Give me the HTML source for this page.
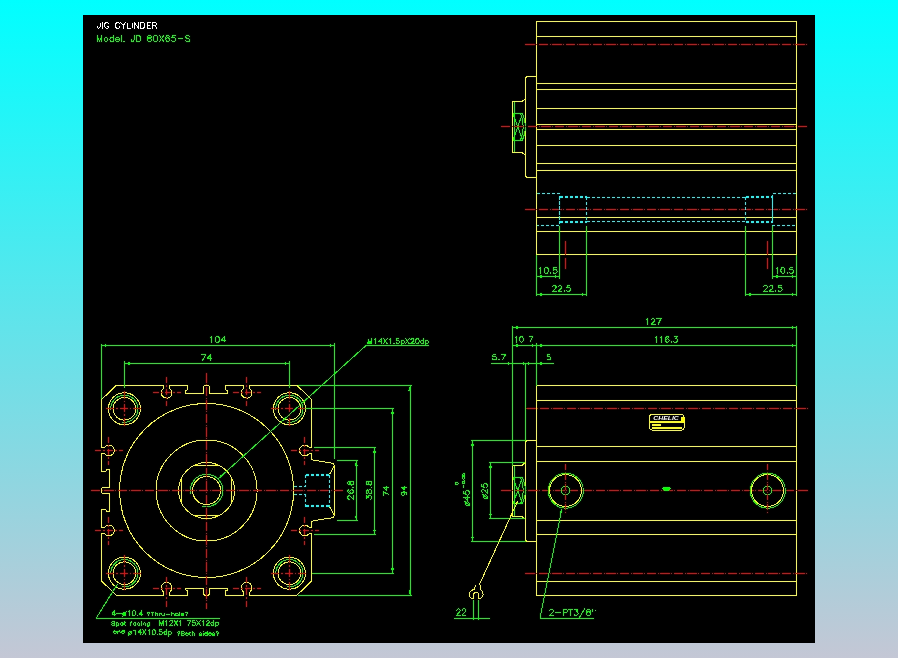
<!DOCTYPE html>
<html><head><meta charset="utf-8"><title>JIG CYLINDER</title>
<style>
html,body{margin:0;padding:0;background:#c4c7d5;}
body{width:898px;height:658px;overflow:hidden;font-family:"Liberation Sans",sans-serif;}
#bg{position:absolute;left:0;top:0;width:898px;height:658px;background:linear-gradient(to bottom,#00ffff 0%,#c4c7d5 100%);}
#panel{position:absolute;left:83px;top:15px;width:732px;height:628px;background:#000;}
svg{position:absolute;left:0;top:0;}
svg text{font-family:"Liberation Sans",sans-serif;}
svg line,svg polyline,svg path,svg circle,svg rect{stroke-width:1;}
</style></head><body>
<div id="bg"></div><div id="panel"></div>
<svg width="898" height="658" viewBox="0 0 898 658">
<defs><filter id="jp" x="83" y="15" width="732" height="628" filterUnits="userSpaceOnUse" color-interpolation-filters="sRGB">
<feConvolveMatrix in="SourceGraphic" order="3" kernelMatrix="1 2 1 2 4 2 1 2 1" divisor="16" edgeMode="duplicate" preserveAlpha="true" result="B"/>
<feColorMatrix in="SourceGraphic" type="matrix" values=".299 .587 .114 0 0 .299 .587 .114 0 0 .299 .587 .114 0 0 0 0 0 0 1" result="YS"/>
<feColorMatrix in="B" type="matrix" values=".299 .587 .114 0 0 .299 .587 .114 0 0 .299 .587 .114 0 0 0 0 0 0 1" result="YB"/>
<feBlend in="YS" in2="YB" mode="lighten" result="MX"/>
<feBlend in="MX" in2="YB" mode="difference" result="T"/>
<feBlend in="MX" in2="YS" mode="difference" result="U"/>
<feComposite in="T" in2="B" operator="arithmetic" k1="0" k2="1" k3="1" k4="0" result="O1"/>
<feBlend in="O1" in2="U" mode="lighten" result="MX2"/>
<feBlend in="MX2" in2="U" mode="difference"/>
</filter></defs>
<g filter="url(#jp)" shape-rendering="crispEdges">
<rect x="83" y="15" width="732" height="628" fill="#000"/>
<path transform="translate(97.1,28.2)" d="M2.91,-5.49 L2.91,-1.26 L2.62,-0.52 L2.28,-0.22 L1.80,0.00 L1.16,0.00 L0.58,-0.26 L0.29,-0.52 L0.00,-1.26 L0.00,-1.83 L0.00,-1.26 L0.29,-0.52 L0.58,-0.26 L1.16,0.00 L1.80,0.00 L2.28,-0.22 L2.62,-0.52 L2.91,-1.26Z M5.29,-5.49 L5.29,0.00 M9.12,-5.49 L10.34,-5.49 L10.82,-5.27 L11.45,-4.70 L11.75,-4.18 L11.45,-4.70 L10.82,-5.27 L10.34,-5.49 L9.12,-5.49 L8.54,-5.22 L7.96,-4.70 L7.38,-3.44 L7.38,-2.05 L7.91,-0.83 L8.54,-0.26 L9.12,0.00 L10.34,0.00 L10.82,-0.22 L11.50,-0.83 L11.75,-1.26 L11.75,-2.09 L10.29,-2.09 L11.75,-2.05 L11.75,-1.26 L11.50,-0.83 L10.82,-0.22 L10.34,0.00 L9.12,0.00 L8.54,-0.26 L7.91,-0.83 L7.38,-2.05 L7.38,-3.44 L7.62,-4.09 L7.96,-4.70 L8.54,-5.22Z M19.95,-5.49 L21.16,-5.49 L21.65,-5.27 L22.28,-4.70 L22.57,-4.18 L22.28,-4.70 L21.65,-5.27 L21.16,-5.49 L19.95,-5.49 L19.37,-5.22 L18.78,-4.70 L18.20,-3.44 L18.20,-2.05 L18.73,-0.83 L19.37,-0.26 L19.95,0.00 L21.16,0.00 L21.65,-0.22 L22.33,-0.83 L22.57,-1.31 L22.33,-0.83 L21.65,-0.22 L21.16,0.00 L19.95,0.00 L19.37,-0.26 L18.73,-0.83 L18.20,-2.05 L18.20,-3.44 L18.44,-4.09 L18.78,-4.70 L19.37,-5.22Z M28.44,-5.49 L26.11,-2.87 L23.78,-5.49 L26.11,-2.87 L26.11,0.00 L26.11,-2.87Z M29.95,-5.49 L29.95,0.00 L33.44,0.00 L29.95,-0.04Z M34.94,-5.49 L34.94,0.00 M37.32,-5.49 L37.32,0.00 L37.37,-5.40 L41.40,0.00 L41.40,-5.49 L41.35,-0.09Z M43.83,-5.49 L45.86,-5.49 L46.59,-5.27 L47.27,-4.70 L47.61,-4.09 L47.85,-3.44 L47.85,-2.05 L47.32,-0.83 L46.59,-0.22 L45.86,0.00 L43.78,-0.04Z M43.78,-5.49 L43.78,0.00 L45.86,0.00 L46.59,-0.22 L47.32,-0.83 L47.85,-2.05 L47.85,-3.44 L47.61,-4.09 L47.27,-4.70 L46.59,-5.27 L45.86,-5.49Z M49.94,-5.49 L49.94,0.00 L53.73,0.00 L49.94,-0.04 L49.94,-2.83 L52.27,-2.87 L49.94,-2.92 L49.94,-5.44 L53.73,-5.49Z M55.52,-5.44 L58.19,-5.49 L59.02,-5.22 L59.31,-4.96 L59.60,-4.44 L59.60,-3.88 L59.36,-3.44 L59.02,-3.13 L58.19,-2.87 L55.57,-2.87Z M55.52,-5.49 L55.52,0.00 L55.57,-2.87 L57.56,-2.87 L59.60,0.00 L57.61,-2.79 L57.66,-2.87 L58.19,-2.87 L58.92,-3.09 L59.36,-3.44 L59.60,-3.88 L59.60,-4.44 L59.31,-4.96 L59.02,-5.22 L58.19,-5.49Z" stroke="#ffffff" fill="none" stroke-width="1.0" stroke-linejoin="round" stroke-linecap="round" style="stroke-width:1.0"/>
<path transform="translate(97.1,41.5)" d="M0.00,-5.91 L0.00,0.00 L0.05,-5.77 L2.40,0.00 L4.71,-5.72 L4.81,-5.72 L4.81,0.00 L4.81,-5.91 L2.40,-0.05Z M8.46,-3.94 L9.41,-3.94 L9.91,-3.71 L10.56,-3.10 L10.86,-2.30 L10.86,-1.64 L10.56,-0.84 L9.91,-0.23 L9.41,0.00 L8.46,0.00 L7.86,-0.28 L7.26,-0.84 L6.96,-1.64 L6.96,-2.30 L7.26,-3.10 L7.86,-3.66Z M8.46,-3.94 L7.86,-3.66 L7.26,-3.10 L6.96,-2.30 L6.96,-1.64 L7.26,-0.84 L7.86,-0.28 L8.46,0.00 L9.41,0.00 L9.91,-0.23 L10.56,-0.84 L10.86,-1.64 L10.86,-2.30 L10.56,-3.10 L9.91,-3.71 L9.41,-3.94Z M14.22,-3.94 L15.17,-3.94 L15.67,-3.71 L16.32,-3.10 L16.32,-0.84 L15.67,-0.23 L15.17,0.00 L14.22,0.00 L13.61,-0.28 L13.01,-0.84 L12.71,-1.64 L12.71,-2.30 L13.01,-3.10 L13.61,-3.66Z M16.32,-5.91 L16.27,-3.14 L15.67,-3.71 L15.17,-3.94 L14.22,-3.94 L13.61,-3.66 L12.96,-3.00 L12.71,-2.30 L12.71,-1.64 L12.96,-0.94 L13.61,-0.28 L14.22,0.00 L15.17,0.00 L15.67,-0.23 L16.27,-0.80 L16.32,0.00Z M18.47,-2.30 L18.77,-3.10 L19.37,-3.66 L19.97,-3.94 L20.92,-3.94 L21.42,-3.71 L21.77,-3.38 L22.07,-2.82 L22.02,-2.25Z M19.97,-3.94 L19.37,-3.66 L18.77,-3.10 L18.47,-2.30 L18.47,-1.64 L18.77,-0.84 L19.37,-0.28 L19.97,0.00 L20.92,0.00 L21.42,-0.23 L22.07,-0.84 L21.42,-0.23 L20.92,0.00 L19.97,0.00 L19.37,-0.28 L18.77,-0.84 L18.47,-1.64 L18.52,-2.25 L22.07,-2.25 L22.07,-2.82 L21.77,-3.38 L21.42,-3.71 L20.92,-3.94Z M24.23,-5.91 L24.23,0.00 M26.98,-0.56 L27.28,-0.28 L26.98,0.00 L26.68,-0.28Z M26.98,-0.56 L26.68,-0.28 L26.98,0.00 L27.28,-0.28Z M36.94,-5.91 L36.94,-1.36 L36.64,-0.56 L36.29,-0.23 L35.79,0.00 L35.14,0.00 L34.54,-0.28 L34.24,-0.56 L33.94,-1.36 L33.94,-1.97 L33.94,-1.36 L34.24,-0.56 L34.54,-0.28 L35.14,0.00 L35.79,0.00 L36.29,-0.23 L36.64,-0.56 L36.94,-1.36Z M39.44,-5.91 L41.54,-5.91 L42.30,-5.68 L43.00,-5.07 L43.35,-4.41 L43.60,-3.71 L43.60,-2.21 L43.05,-0.89 L42.30,-0.23 L41.54,0.00 L39.39,-0.05Z M39.39,-5.91 L39.39,0.00 L41.54,0.00 L42.30,-0.23 L43.05,-0.89 L43.60,-2.21 L43.60,-3.71 L43.35,-4.41 L43.00,-5.07 L42.30,-5.68 L41.54,-5.91Z M50.55,-2.53 L51.16,-3.10 L52.21,-3.43 L52.56,-3.43 L53.46,-3.14 L54.16,-2.53 L54.46,-1.97 L54.46,-1.08 L54.21,-0.61 L53.86,-0.28 L53.01,0.00 L51.71,0.00 L50.96,-0.23 L50.50,-0.61 L50.25,-1.08 L50.25,-1.97Z M50.55,-5.07 L50.96,-5.68 L51.71,-5.91 L53.01,-5.91 L53.76,-5.68 L53.91,-5.54 L54.16,-5.07 L54.16,-4.46 L53.81,-3.89 L53.16,-3.61 L52.21,-3.47 L51.46,-3.66 L50.80,-3.99 L50.55,-4.46Z M51.71,-5.91 L50.85,-5.63 L50.55,-5.07 L50.55,-4.46 L50.85,-3.94 L51.46,-3.66 L52.16,-3.52 L52.21,-3.43 L51.16,-3.10 L50.55,-2.53 L50.25,-1.97 L50.25,-1.08 L50.50,-0.61 L50.96,-0.23 L51.71,0.00 L53.01,0.00 L53.86,-0.28 L54.21,-0.61 L54.46,-1.08 L54.46,-1.97 L54.16,-2.53 L53.56,-3.10 L52.61,-3.38 L52.56,-3.47 L53.31,-3.66 L53.91,-3.99 L54.16,-4.46 L54.16,-5.07 L53.76,-5.68 L53.01,-5.91Z M58.06,-5.91 L58.76,-5.91 L59.66,-5.58 L60.22,-4.79 L60.52,-3.47 L60.52,-2.44 L60.22,-1.13 L59.61,-0.28 L58.76,0.00 L58.06,0.00 L57.16,-0.33 L56.61,-1.13 L56.31,-2.44 L56.31,-3.47 L56.61,-4.79 L57.21,-5.63Z M58.06,-5.91 L57.21,-5.63 L56.61,-4.79 L56.31,-3.47 L56.31,-2.44 L56.61,-1.13 L57.16,-0.33 L58.06,0.00 L58.76,0.00 L59.61,-0.28 L60.22,-1.13 L60.52,-2.44 L60.52,-3.47 L60.22,-4.79 L59.66,-5.58 L58.76,-5.91Z M62.37,-5.91 L64.47,-2.96 L62.37,0.00 L64.47,-2.96 L66.57,0.00 L64.47,-2.96 L66.57,-5.91 L64.47,-2.96Z M70.48,-3.66 L70.88,-3.66 L71.73,-3.38 L72.33,-2.82 L72.63,-2.02 L72.63,-1.64 L72.33,-0.84 L71.73,-0.28 L70.88,0.00 L70.48,0.00 L69.63,-0.28 L69.02,-0.84 L68.72,-1.88 L69.02,-2.82 L69.63,-3.38Z M70.48,-5.91 L71.18,-5.91 L71.93,-5.68 L72.33,-5.07 L72.03,-5.63 L71.18,-5.91 L70.48,-5.91 L69.63,-5.63 L68.97,-4.65 L68.72,-3.47 L68.72,-1.88 L69.02,-0.84 L69.63,-0.28 L70.48,0.00 L70.88,0.00 L71.73,-0.28 L72.38,-0.94 L72.63,-1.64 L72.63,-2.02 L72.33,-2.82 L71.63,-3.43 L70.88,-3.66 L70.48,-3.66 L69.63,-3.38 L69.02,-2.82 L68.82,-2.21 L68.72,-2.21 L68.72,-3.47 L69.02,-4.79 L69.63,-5.63Z M75.08,-5.91 L74.78,-3.38 L75.08,-3.66 L75.93,-3.94 L76.93,-3.94 L77.78,-3.66 L78.43,-3.00 L78.68,-2.30 L78.68,-1.64 L78.38,-0.84 L77.68,-0.23 L76.93,0.00 L75.93,0.00 L75.08,-0.28 L74.73,-0.61 L74.48,-1.13 L74.73,-0.61 L75.08,-0.28 L75.93,0.00 L76.93,0.00 L77.68,-0.23 L78.38,-0.84 L78.68,-1.64 L78.68,-2.30 L78.38,-3.10 L77.78,-3.66 L76.93,-3.94 L75.93,-3.94 L75.18,-3.71 L74.83,-3.43 L74.78,-3.47 L75.03,-5.68 L75.13,-5.91 L78.08,-5.91Z M80.84,-2.53 L86.24,-2.53 M89.85,-5.91 L91.15,-5.91 L92.00,-5.63 L92.60,-5.07 L92.00,-5.63 L91.15,-5.91 L89.85,-5.91 L89.00,-5.63 L88.40,-5.07 L88.40,-4.46 L88.65,-3.99 L89.00,-3.66 L89.70,-3.33 L91.45,-2.82 L91.95,-2.58 L92.30,-2.25 L92.60,-1.69 L92.60,-0.84 L92.00,-0.28 L91.15,0.00 L89.85,0.00 L89.00,-0.28 L88.40,-0.84 L89.00,-0.28 L89.85,0.00 L91.15,0.00 L92.00,-0.28 L92.60,-0.84 L92.60,-1.69 L92.30,-2.25 L91.95,-2.58 L91.45,-2.82 L89.70,-3.33 L89.00,-3.66 L88.65,-3.99 L88.40,-4.46 L88.40,-5.07 L89.00,-5.63Z" stroke="#00ff00" fill="none" stroke-width="1.0" stroke-linejoin="round" stroke-linecap="round" style="stroke-width:1.0"/>
<rect x="536.5" y="21.5" width="260.0" height="233" stroke="#ffff00" fill="none"/>
<line x1="536.5" y1="36.5" x2="796.5" y2="36.5" stroke="#ffff00" />
<line x1="536.5" y1="83.5" x2="796.5" y2="83.5" stroke="#ffff00" />
<line x1="536.5" y1="89.5" x2="796.5" y2="89.5" stroke="#ffff00" />
<line x1="536.5" y1="108.5" x2="796.5" y2="108.5" stroke="#ffff00" />
<line x1="536.5" y1="124.5" x2="796.5" y2="124.5" stroke="#ffff00" />
<line x1="536.5" y1="129.5" x2="796.5" y2="129.5" stroke="#ffff00" />
<line x1="536.5" y1="145.5" x2="796.5" y2="145.5" stroke="#ffff00" />
<line x1="536.5" y1="163.5" x2="796.5" y2="163.5" stroke="#ffff00" />
<line x1="536.5" y1="170.5" x2="796.5" y2="170.5" stroke="#ffff00" />
<line x1="536.5" y1="217.5" x2="796.5" y2="217.5" stroke="#ffff00" />
<line x1="536.5" y1="231.5" x2="796.5" y2="231.5" stroke="#ffff00" />
<polyline points="536.5,76.5 527,76.5 525.5,78 525.5,176 527,177.5 536.5,177.5" stroke="#ffff00" fill="none" />
<polyline points="525.5,98.5 522,101.5 512.5,101.5 512.5,152.5 522,152.5 525.5,155.5" stroke="#ffff00" fill="none" />
<line x1="514.5" y1="101.8" x2="514.5" y2="151.8" stroke="#00ff00" />
<line x1="512.5" y1="113.6" x2="522.5" y2="113.6" stroke="#00ff00" />
<line x1="512.5" y1="140.0" x2="522.5" y2="140.0" stroke="#00ff00" />
<line x1="513" y1="113.6" x2="522.5" y2="140.0" stroke="#00ff00" />
<line x1="522.5" y1="113.6" x2="513" y2="140.0" stroke="#00ff00" />
<path d="M522.5,113.6 Q528.5,126.8 522.5,140.0" stroke="#00ff00" fill="none" />
<path d="M520.5,113.6 Q526,126.8 520.5,140.0" stroke="#00ff00" fill="none" />
<line x1="525" y1="44.5" x2="807" y2="44.5" stroke="#ff0000" stroke-dasharray="9.5 1.5 1 1.5"/>
<line x1="500.5" y1="126.5" x2="807" y2="126.5" stroke="#ff0000" stroke-dasharray="9.5 1.5 1 1.5"/>
<line x1="525" y1="209.5" x2="807" y2="209.5" stroke="#ff0000" stroke-dasharray="9.5 1.5 1 1.5"/>
<polyline points="537,193.5 559.5,193.5 559.5,225.5 537,225.5" stroke="#00ffff" fill="none" stroke-dasharray="3 2"/>
<polyline points="796,193.5 772.5,193.5 772.5,225.5 796,225.5" stroke="#00ffff" fill="none" stroke-dasharray="3 2"/>
<line x1="559.5" y1="197" x2="586.5" y2="197" stroke="#00ffff" stroke-dasharray="3 2" style="stroke-width:2"/>
<line x1="559.5" y1="222" x2="586.5" y2="222" stroke="#00ffff" stroke-dasharray="3 2" style="stroke-width:2"/>
<line x1="559.5" y1="197" x2="559.5" y2="222" stroke="#00ffff" stroke-dasharray="3 2"/>
<line x1="586.5" y1="197" x2="586.5" y2="222" stroke="#00ffff" stroke-dasharray="3 2"/>
<line x1="745.5" y1="197" x2="772.5" y2="197" stroke="#00ffff" stroke-dasharray="3 2" style="stroke-width:2"/>
<line x1="745.5" y1="222" x2="772.5" y2="222" stroke="#00ffff" stroke-dasharray="3 2" style="stroke-width:2"/>
<line x1="745.5" y1="197" x2="745.5" y2="222" stroke="#00ffff" stroke-dasharray="3 2"/>
<line x1="772.5" y1="197" x2="772.5" y2="222" stroke="#00ffff" stroke-dasharray="3 2"/>
<line x1="586.5" y1="197.5" x2="745.5" y2="197.5" stroke="#00ffff" stroke-dasharray="3 2"/>
<line x1="586.5" y1="221.5" x2="745.5" y2="221.5" stroke="#00ffff" stroke-dasharray="3 2"/>
<line x1="536.5" y1="254.5" x2="536.5" y2="296" stroke="#00ff00" />
<line x1="559.5" y1="225.5" x2="559.5" y2="279" stroke="#00ff00" />
<line x1="586.5" y1="225.5" x2="586.5" y2="296" stroke="#00ff00" />
<line x1="745.5" y1="225.5" x2="745.5" y2="296" stroke="#00ff00" />
<line x1="772.5" y1="225.5" x2="772.5" y2="279" stroke="#00ff00" />
<line x1="796.5" y1="254.5" x2="796.5" y2="296" stroke="#00ff00" />
<line x1="536.5" y1="276.5" x2="559.5" y2="276.5" stroke="#00ff00" />
<polygon points="536.5,276.5 541.50,275.00 541.50,278.00" fill="#00ff00" stroke="none"/>
<polygon points="559.5,276.5 554.50,278.00 554.50,275.00" fill="#00ff00" stroke="none"/>
<line x1="536.5" y1="294.5" x2="586.5" y2="294.5" stroke="#00ff00" />
<polygon points="536.5,294.5 541.50,293.00 541.50,296.00" fill="#00ff00" stroke="none"/>
<polygon points="586.5,294.5 581.50,296.00 581.50,293.00" fill="#00ff00" stroke="none"/>
<line x1="772.5" y1="276.5" x2="796.5" y2="276.5" stroke="#00ff00" />
<polygon points="772.5,276.5 777.50,275.00 777.50,278.00" fill="#00ff00" stroke="none"/>
<polygon points="796.5,276.5 791.50,278.00 791.50,275.00" fill="#00ff00" stroke="none"/>
<line x1="745.5" y1="294.5" x2="796.5" y2="294.5" stroke="#00ff00" />
<polygon points="745.5,294.5 750.50,293.00 750.50,296.00" fill="#00ff00" stroke="none"/>
<polygon points="796.5,294.5 791.50,296.00 791.50,293.00" fill="#00ff00" stroke="none"/>
<line x1="565.5" y1="241" x2="565.5" y2="255" stroke="#ff0000" />
<line x1="565.5" y1="258" x2="565.5" y2="269" stroke="#ff0000" />
<line x1="767.5" y1="241" x2="767.5" y2="255" stroke="#ff0000" />
<line x1="767.5" y1="258" x2="767.5" y2="269" stroke="#ff0000" />
<path transform="translate(539.5,273.3)" d="M1.42,-5.63 L0.52,-4.78 L0.00,-4.56 L0.52,-4.78 L1.38,-5.58 L1.42,-5.54 L1.42,0.00Z M6.54,-5.63 L7.21,-5.63 L8.06,-5.32 L8.58,-4.56 L8.87,-3.31 L8.87,-2.32 L8.58,-1.07 L8.01,-0.27 L7.21,0.00 L6.54,0.00 L5.69,-0.31 L5.17,-1.07 L4.88,-2.32 L4.88,-3.31 L5.17,-4.56 L5.74,-5.36Z M6.54,-5.63 L5.74,-5.36 L5.17,-4.56 L4.88,-3.31 L4.88,-2.32 L5.17,-1.07 L5.69,-0.31 L6.54,0.00 L7.21,0.00 L8.01,-0.27 L8.58,-1.07 L8.87,-2.32 L8.87,-3.31 L8.58,-4.56 L8.06,-5.32 L7.21,-5.63Z M11.19,-0.54 L11.48,-0.27 L11.19,0.00 L10.91,-0.27Z M11.19,-0.54 L10.91,-0.27 L11.19,0.00 L11.48,-0.27Z M14.09,-5.63 L13.80,-3.22 L14.09,-3.48 L14.89,-3.75 L15.84,-3.75 L16.65,-3.48 L17.26,-2.86 L17.50,-2.19 L17.50,-1.56 L17.22,-0.80 L16.55,-0.22 L15.84,0.00 L14.89,0.00 L14.09,-0.27 L13.75,-0.58 L13.52,-1.07 L13.75,-0.58 L14.09,-0.27 L14.89,0.00 L15.84,0.00 L16.55,-0.22 L17.22,-0.80 L17.50,-1.56 L17.50,-2.19 L17.22,-2.95 L16.65,-3.48 L15.84,-3.75 L14.89,-3.75 L14.18,-3.53 L13.85,-3.26 L13.80,-3.31 L14.04,-5.40 L14.13,-5.63 L16.93,-5.63Z" stroke="#00ff00" fill="none" stroke-width="1.0" stroke-linejoin="round" stroke-linecap="round" style="stroke-width:1.0"/>
<path transform="translate(552.5,291.3)" d="M1.40,-5.63 L0.84,-5.36 L0.56,-5.09 L0.28,-4.56 L0.28,-4.29 L0.28,-4.56 L0.56,-5.09 L0.84,-5.36 L1.40,-5.63 L2.56,-5.63 L3.02,-5.40 L3.35,-5.09 L3.63,-4.56 L3.63,-3.98 L2.84,-2.72 L0.00,0.00 L3.91,0.00 L0.05,-0.04 L2.84,-2.72 L3.63,-3.98 L3.63,-4.56 L3.35,-5.09 L3.02,-5.40 L2.56,-5.63Z M7.02,-5.63 L6.47,-5.36 L6.19,-5.09 L5.91,-4.56 L5.91,-4.29 L5.91,-4.56 L6.19,-5.09 L6.47,-5.36 L7.02,-5.63 L8.19,-5.63 L8.65,-5.40 L8.98,-5.09 L9.26,-4.56 L9.26,-3.98 L8.47,-2.72 L5.63,0.00 L9.53,0.00 L5.67,-0.04 L8.47,-2.72 L9.26,-3.98 L9.26,-4.56 L8.98,-5.09 L8.65,-5.40 L8.19,-5.63Z M11.81,-0.54 L12.09,-0.27 L11.81,0.00 L11.53,-0.27Z M11.81,-0.54 L11.53,-0.27 L11.81,0.00 L12.09,-0.27Z M14.65,-5.63 L14.37,-3.22 L14.65,-3.48 L15.44,-3.75 L16.37,-3.75 L17.16,-3.48 L17.77,-2.86 L18.00,-2.19 L18.00,-1.56 L17.72,-0.80 L17.07,-0.22 L16.37,0.00 L15.44,0.00 L14.65,-0.27 L14.33,-0.58 L14.09,-1.07 L14.33,-0.58 L14.65,-0.27 L15.44,0.00 L16.37,0.00 L17.07,-0.22 L17.72,-0.80 L18.00,-1.56 L18.00,-2.19 L17.72,-2.95 L17.16,-3.48 L16.37,-3.75 L15.44,-3.75 L14.74,-3.53 L14.42,-3.26 L14.37,-3.31 L14.60,-5.40 L14.70,-5.63 L17.44,-5.63Z" stroke="#00ff00" fill="none" stroke-width="1.0" stroke-linejoin="round" stroke-linecap="round" style="stroke-width:1.0"/>
<path transform="translate(776.0,273.3)" d="M1.42,-5.63 L0.52,-4.78 L0.00,-4.56 L0.52,-4.78 L1.38,-5.58 L1.42,-5.54 L1.42,0.00Z M6.54,-5.63 L7.21,-5.63 L8.06,-5.32 L8.58,-4.56 L8.87,-3.31 L8.87,-2.32 L8.58,-1.07 L8.01,-0.27 L7.21,0.00 L6.54,0.00 L5.69,-0.31 L5.17,-1.07 L4.88,-2.32 L4.88,-3.31 L5.17,-4.56 L5.74,-5.36Z M6.54,-5.63 L5.74,-5.36 L5.17,-4.56 L4.88,-3.31 L4.88,-2.32 L5.17,-1.07 L5.69,-0.31 L6.54,0.00 L7.21,0.00 L8.01,-0.27 L8.58,-1.07 L8.87,-2.32 L8.87,-3.31 L8.58,-4.56 L8.06,-5.32 L7.21,-5.63Z M11.19,-0.54 L11.48,-0.27 L11.19,0.00 L10.91,-0.27Z M11.19,-0.54 L10.91,-0.27 L11.19,0.00 L11.48,-0.27Z M14.09,-5.63 L13.80,-3.22 L14.09,-3.48 L14.89,-3.75 L15.84,-3.75 L16.65,-3.48 L17.26,-2.86 L17.50,-2.19 L17.50,-1.56 L17.22,-0.80 L16.55,-0.22 L15.84,0.00 L14.89,0.00 L14.09,-0.27 L13.75,-0.58 L13.52,-1.07 L13.75,-0.58 L14.09,-0.27 L14.89,0.00 L15.84,0.00 L16.55,-0.22 L17.22,-0.80 L17.50,-1.56 L17.50,-2.19 L17.22,-2.95 L16.65,-3.48 L15.84,-3.75 L14.89,-3.75 L14.18,-3.53 L13.85,-3.26 L13.80,-3.31 L14.04,-5.40 L14.13,-5.63 L16.93,-5.63Z" stroke="#00ff00" fill="none" stroke-width="1.0" stroke-linejoin="round" stroke-linecap="round" style="stroke-width:1.0"/>
<path transform="translate(763.5,291.3)" d="M1.43,-5.63 L0.86,-5.36 L0.57,-5.09 L0.29,-4.56 L0.29,-4.29 L0.29,-4.56 L0.57,-5.09 L0.86,-5.36 L1.43,-5.63 L2.63,-5.63 L3.11,-5.40 L3.44,-5.09 L3.73,-4.56 L3.73,-3.98 L2.92,-2.72 L0.00,0.00 L4.02,0.00 L0.05,-0.04 L2.92,-2.72 L3.73,-3.98 L3.73,-4.56 L3.44,-5.09 L3.11,-5.40 L2.63,-5.63Z M7.22,-5.63 L6.64,-5.36 L6.36,-5.09 L6.07,-4.56 L6.07,-4.29 L6.07,-4.56 L6.36,-5.09 L6.64,-5.36 L7.22,-5.63 L8.41,-5.63 L8.89,-5.40 L9.23,-5.09 L9.51,-4.56 L9.51,-3.98 L8.70,-2.72 L5.78,0.00 L9.80,0.00 L5.83,-0.04 L8.70,-2.72 L9.51,-3.98 L9.51,-4.56 L9.23,-5.09 L8.89,-5.40 L8.41,-5.63Z M12.14,-0.54 L12.43,-0.27 L12.14,0.00 L11.86,-0.27Z M12.14,-0.54 L11.86,-0.27 L12.14,0.00 L12.43,-0.27Z M15.06,-5.63 L14.77,-3.22 L15.06,-3.48 L15.87,-3.75 L16.83,-3.75 L17.64,-3.48 L18.26,-2.86 L18.50,-2.19 L18.50,-1.56 L18.21,-0.80 L17.54,-0.22 L16.83,0.00 L15.87,0.00 L15.06,-0.27 L14.72,-0.58 L14.48,-1.07 L14.72,-0.58 L15.06,-0.27 L15.87,0.00 L16.83,0.00 L17.54,-0.22 L18.21,-0.80 L18.50,-1.56 L18.50,-2.19 L18.21,-2.95 L17.64,-3.48 L16.83,-3.75 L15.87,-3.75 L15.15,-3.53 L14.82,-3.26 L14.77,-3.31 L15.01,-5.40 L15.11,-5.63 L17.93,-5.63Z" stroke="#00ff00" fill="none" stroke-width="1.0" stroke-linejoin="round" stroke-linecap="round" style="stroke-width:1.0"/>
<rect x="536.5" y="385.5" width="260.0" height="210" stroke="#ffff00" fill="none"/>
<line x1="536.5" y1="400.5" x2="796.5" y2="400.5" stroke="#ffff00" />
<line x1="536.5" y1="446.5" x2="796.5" y2="446.5" stroke="#ffff00" />
<line x1="536.5" y1="461.5" x2="796.5" y2="461.5" stroke="#ffff00" />
<line x1="536.5" y1="520.5" x2="796.5" y2="520.5" stroke="#ffff00" />
<line x1="536.5" y1="534.5" x2="796.5" y2="534.5" stroke="#ffff00" />
<line x1="536.5" y1="581.5" x2="796.5" y2="581.5" stroke="#ffff00" />
<polyline points="536.5,440.5 527,440.5 525.5,442 525.5,540 527,541.5 536.5,541.5" stroke="#ffff00" fill="none" />
<polyline points="525.5,462 522,465.5 512.5,465.5 512.5,516.5 522,516.5 525.5,519.5" stroke="#ffff00" fill="none" />
<line x1="514.5" y1="465.6" x2="514.5" y2="515.6" stroke="#00ff00" />
<line x1="512.5" y1="477.40000000000003" x2="522.5" y2="477.40000000000003" stroke="#00ff00" />
<line x1="512.5" y1="503.8" x2="522.5" y2="503.8" stroke="#00ff00" />
<line x1="513" y1="477.40000000000003" x2="522.5" y2="503.8" stroke="#00ff00" />
<line x1="522.5" y1="477.40000000000003" x2="513" y2="503.8" stroke="#00ff00" />
<path d="M522.5,477.40000000000003 Q528.5,490.6 522.5,503.8" stroke="#00ff00" fill="none" />
<path d="M520.5,477.40000000000003 Q526,490.6 520.5,503.8" stroke="#00ff00" fill="none" />
<line x1="526" y1="408.5" x2="807.5" y2="408.5" stroke="#ff0000" stroke-dasharray="9.5 1.5 1 1.5"/>
<line x1="501" y1="490.5" x2="808" y2="490.5" stroke="#ff0000" stroke-dasharray="9.5 1.5 1 1.5"/>
<line x1="525" y1="573.5" x2="808" y2="573.5" stroke="#ff0000" stroke-dasharray="9.5 1.5 1 1.5"/>
<circle cx="565.5" cy="490.5" r="16" stroke="#ffff00" fill="none" />
<circle cx="565.8" cy="490.7" r="17.5" stroke="#00ff00" fill="none" />
<circle cx="565.5" cy="490.5" r="4.4" stroke="#00ff00" fill="none" />
<line x1="565.5" y1="464" x2="565.5" y2="514" stroke="#ff0000" stroke-dasharray="6 1.5 1 1.5"/>
<circle cx="767.5" cy="490.5" r="16" stroke="#ffff00" fill="none" />
<circle cx="767.8" cy="490.7" r="17.5" stroke="#00ff00" fill="none" />
<circle cx="767.5" cy="490.5" r="4.4" stroke="#00ff00" fill="none" />
<line x1="767.5" y1="464" x2="767.5" y2="514" stroke="#ff0000" stroke-dasharray="6 1.5 1 1.5"/>
<ellipse cx="666.5" cy="488.8" rx="4.2" ry="1.9" fill="#00ff00"/>
<rect x="649.5" y="414.5" width="34.5" height="15.5" rx="2.5" stroke="#ffff00" fill="#000"/>
<rect x="650" y="421.3" width="33.5" height="1.6" fill="#ffff00"/>
<rect x="651.5" y="427" width="30" height="2.4" fill="#ffff00"/>
<rect x="651.5" y="424" width="9" height="1.6" fill="#ffff00"/>
<rect x="681" y="417" width="3" height="4.5" fill="#ffff00"/>
<text x="653.3" y="420.4" fill="#ffffff" font-size="5.6" textLength="25.5" lengthAdjust="spacingAndGlyphs" font-style="italic" font-weight="bold">CHELIC</text>
<line x1="512.5" y1="326" x2="512.5" y2="465.5" stroke="#00ff00" />
<line x1="796.5" y1="326" x2="796.5" y2="385.5" stroke="#00ff00" />
<line x1="536.5" y1="343" x2="536.5" y2="385.5" stroke="#00ff00" />
<line x1="525.5" y1="363.5" x2="525.5" y2="440.5" stroke="#00ff00" />
<line x1="512.5" y1="327.5" x2="796.5" y2="327.5" stroke="#00ff00" />
<polygon points="512.5,327.5 517.50,326.00 517.50,329.00" fill="#00ff00" stroke="none"/>
<polygon points="796.5,327.5 791.50,329.00 791.50,326.00" fill="#00ff00" stroke="none"/>
<line x1="512.5" y1="345.5" x2="796.5" y2="345.5" stroke="#00ff00" />
<polygon points="512.5,345.5 517.50,344.00 517.50,347.00" fill="#00ff00" stroke="none"/>
<polygon points="536.5,345.5 531.50,347.00 531.50,344.00" fill="#00ff00" stroke="none"/>
<polygon points="536.5,345.5 541.50,344.00 541.50,347.00" fill="#00ff00" stroke="none"/>
<polygon points="796.5,345.5 791.50,347.00 791.50,344.00" fill="#00ff00" stroke="none"/>
<line x1="491" y1="363.5" x2="553.5" y2="363.5" stroke="#00ff00" />
<polygon points="512.5,363.5 507.50,365.00 507.50,362.00" fill="#00ff00" stroke="none"/>
<polygon points="525.5,363.5 528.50,362.00 528.50,365.00" fill="#00ff00" stroke="none"/>
<polygon points="525.5,363.5 522.50,365.00 522.50,362.00" fill="#00ff00" stroke="none"/>
<polygon points="536.5,363.5 541.50,362.00 541.50,365.00" fill="#00ff00" stroke="none"/>
<path transform="translate(646.0,324.3)" d="M1.46,-5.63 L0.54,-4.78 L0.00,-4.56 L0.54,-4.78 L1.41,-5.58 L1.46,-5.54 L1.46,0.00Z M6.48,-5.63 L5.89,-5.36 L5.60,-5.09 L5.31,-4.56 L5.31,-4.29 L5.31,-4.56 L5.60,-5.09 L5.89,-5.36 L6.48,-5.63 L7.69,-5.63 L8.18,-5.40 L8.52,-5.09 L8.81,-4.56 L8.81,-3.98 L7.99,-2.72 L5.02,0.00 L9.11,0.00 L5.06,-0.04 L7.99,-2.72 L8.81,-3.98 L8.81,-4.56 L8.52,-5.09 L8.18,-5.40 L7.69,-5.63Z M15.00,-5.63 L10.91,-5.63 L15.00,-5.58 L12.08,0.00Z" stroke="#00ff00" fill="none" stroke-width="1.0" stroke-linejoin="round" stroke-linecap="round" style="stroke-width:1.0"/>
<path transform="translate(655.0,342.3)" d="M1.38,-5.63 L0.51,-4.78 L0.00,-4.56 L0.51,-4.78 L1.33,-5.58 L1.38,-5.54 L1.38,0.00Z M6.93,-5.63 L6.06,-4.78 L5.56,-4.56 L6.06,-4.78 L6.89,-5.58 L6.93,-5.54 L6.93,0.00Z M12.17,-3.48 L12.54,-3.48 L13.32,-3.22 L13.87,-2.68 L14.14,-1.92 L14.14,-1.56 L13.87,-0.80 L13.32,-0.27 L12.54,0.00 L12.17,0.00 L11.39,-0.27 L10.84,-0.80 L10.56,-1.79 L10.84,-2.68 L11.39,-3.22Z M12.17,-5.63 L12.81,-5.63 L13.50,-5.40 L13.87,-4.82 L13.59,-5.36 L12.81,-5.63 L12.17,-5.63 L11.39,-5.36 L10.79,-4.42 L10.56,-3.31 L10.56,-1.79 L10.84,-0.80 L11.39,-0.27 L12.17,0.00 L12.54,0.00 L13.32,-0.27 L13.91,-0.89 L14.14,-1.56 L14.14,-1.92 L13.87,-2.68 L13.22,-3.26 L12.54,-3.48 L12.17,-3.48 L11.39,-3.22 L10.84,-2.68 L10.65,-2.10 L10.56,-2.10 L10.56,-3.31 L10.84,-4.56 L11.39,-5.36Z M16.39,-0.54 L16.67,-0.27 L16.39,0.00 L16.12,-0.27Z M16.39,-0.54 L16.12,-0.27 L16.39,0.00 L16.67,-0.27Z M19.19,-5.63 L22.18,-5.58 L20.57,-3.48 L21.44,-3.48 L21.90,-3.26 L22.22,-2.95 L22.50,-2.19 L22.50,-1.56 L22.27,-0.89 L21.58,-0.22 L20.89,0.00 L19.97,0.00 L19.19,-0.27 L18.87,-0.58 L18.64,-1.07 L18.87,-0.58 L19.19,-0.27 L19.97,0.00 L20.89,0.00 L21.58,-0.22 L22.22,-0.80 L22.50,-1.56 L22.50,-2.19 L22.22,-2.95 L21.90,-3.26 L21.44,-3.48 L20.62,-3.53 L22.22,-5.63Z" stroke="#00ff00" fill="none" stroke-width="1.0" stroke-linejoin="round" stroke-linecap="round" style="stroke-width:1.0"/>
<path transform="translate(515.2,342.1)" d="M1.30,-5.34 L0.48,-4.54 L0.00,-4.33 L0.48,-4.54 L1.26,-5.30 L1.30,-5.26 L1.30,0.00Z M5.98,-5.34 L6.58,-5.34 L7.36,-5.05 L7.84,-4.33 L8.10,-3.14 L8.10,-2.21 L7.84,-1.02 L7.32,-0.25 L6.58,0.00 L5.98,0.00 L5.20,-0.30 L4.72,-1.02 L4.46,-2.21 L4.46,-3.14 L4.72,-4.33 L5.24,-5.09Z M5.98,-5.34 L5.24,-5.09 L4.72,-4.33 L4.46,-3.14 L4.46,-2.21 L4.72,-1.02 L5.20,-0.30 L5.98,0.00 L6.58,0.00 L7.32,-0.25 L7.84,-1.02 L8.10,-2.21 L8.10,-3.14 L7.84,-4.33 L7.36,-5.05 L6.58,-5.34Z M17.50,-5.34 L13.86,-5.34 L17.50,-5.30 L14.90,0.00Z" stroke="#00ff00" fill="none" stroke-width="1.0" stroke-linejoin="round" stroke-linecap="round" style="stroke-width:1.0"/>
<path transform="translate(492.5,359.90000000000003)" d="M0.59,-5.20 L0.29,-2.97 L0.59,-3.22 L1.42,-3.47 L2.39,-3.47 L3.23,-3.22 L3.86,-2.64 L4.11,-2.02 L4.11,-1.44 L3.81,-0.74 L3.13,-0.21 L2.39,0.00 L1.42,0.00 L0.59,-0.25 L0.24,-0.54 L0.00,-0.99 L0.24,-0.54 L0.59,-0.25 L1.42,0.00 L2.39,0.00 L3.13,-0.21 L3.81,-0.74 L4.11,-1.44 L4.11,-2.02 L3.81,-2.72 L3.23,-3.22 L2.39,-3.47 L1.42,-3.47 L0.68,-3.26 L0.34,-3.01 L0.29,-3.06 L0.54,-5.00 L0.64,-5.20 L3.52,-5.20Z M6.50,-0.50 L6.79,-0.25 L6.50,0.00 L6.21,-0.25Z M6.50,-0.50 L6.21,-0.25 L6.50,0.00 L6.79,-0.25Z M13.00,-5.20 L8.89,-5.20 L13.00,-5.16 L10.07,0.00Z" stroke="#00ff00" fill="none" stroke-width="1.0" stroke-linejoin="round" stroke-linecap="round" style="stroke-width:1.0"/>
<path transform="translate(546.8,359.90000000000003)" d="M0.54,-5.20 L0.27,-2.97 L0.54,-3.22 L1.31,-3.47 L2.22,-3.47 L2.99,-3.22 L3.57,-2.64 L3.80,-2.02 L3.80,-1.44 L3.53,-0.74 L2.90,-0.21 L2.22,0.00 L1.31,0.00 L0.54,-0.25 L0.23,-0.54 L0.00,-0.99 L0.23,-0.54 L0.54,-0.25 L1.31,0.00 L2.22,0.00 L2.90,-0.21 L3.53,-0.74 L3.80,-1.44 L3.80,-2.02 L3.53,-2.72 L2.99,-3.22 L2.22,-3.47 L1.31,-3.47 L0.63,-3.26 L0.32,-3.01 L0.27,-3.06 L0.50,-5.00 L0.59,-5.20 L3.26,-5.20Z" stroke="#00ff00" fill="none" stroke-width="1.0" stroke-linejoin="round" stroke-linecap="round" style="stroke-width:1.0"/>
<line x1="470.5" y1="440.5" x2="525.5" y2="440.5" stroke="#00ff00" />
<line x1="470.5" y1="541.5" x2="525.5" y2="541.5" stroke="#00ff00" />
<line x1="472.5" y1="440.5" x2="472.5" y2="541.5" stroke="#00ff00" />
<polygon points="472.5,440.5 474.00,445.50 471.00,445.50" fill="#00ff00" stroke="none"/>
<polygon points="472.5,541.5 471.00,536.50 474.00,536.50" fill="#00ff00" stroke="none"/>
<line x1="488.5" y1="462.5" x2="524.5" y2="462.5" stroke="#00ff00" />
<line x1="488.5" y1="518.5" x2="524.5" y2="518.5" stroke="#00ff00" />
<line x1="490.5" y1="462.5" x2="490.5" y2="518.5" stroke="#00ff00" />
<polygon points="490.5,462.5 492.00,467.50 489.00,467.50" fill="#00ff00" stroke="none"/>
<polygon points="490.5,518.5 489.00,513.50 492.00,513.50" fill="#00ff00" stroke="none"/>
<path transform="translate(487.3,499.0) rotate(-90)" d="M1.84,-3.66 L2.73,-3.66 L3.20,-3.44 L3.82,-2.87 L4.10,-2.13 L4.10,-1.52 L3.82,-0.78 L3.20,-0.22 L2.73,0.00 L1.84,0.00 L1.27,-0.26 L0.71,-0.78 L0.42,-1.52 L0.42,-2.13 L0.71,-2.87 L1.27,-3.40 M1.84,-3.66 L1.27,-3.40 L0.71,-2.87 L0.42,-2.13 L0.42,-1.52 L0.71,-0.78 L1.27,-0.26 L1.84,0.00 L2.73,0.00 L3.20,-0.22 L3.82,-0.78 L4.10,-1.52 L4.10,-2.13 L3.82,-2.87 L3.20,-3.44 L2.73,-3.66 M0.00,0.65 L4.52,-4.31 M7.26,-5.49 L6.69,-5.22 L6.41,-4.96 L6.12,-4.44 L6.12,-4.18 L6.12,-4.44 L6.41,-4.96 L6.69,-5.22 L7.26,-5.49 L8.43,-5.49 L8.90,-5.27 L9.23,-4.96 L9.52,-4.44 L9.52,-3.88 L8.72,-2.66 L5.84,0.00 L9.80,0.00 L5.89,-0.04 L8.72,-2.66 L9.52,-3.88 L9.52,-4.44 L9.23,-4.96 L8.90,-5.27 L8.43,-5.49Z M12.11,-5.49 L11.83,-3.13 L12.11,-3.40 L12.91,-3.66 L13.85,-3.66 L14.65,-3.40 L15.26,-2.79 L15.50,-2.13 L15.50,-1.52 L15.22,-0.78 L14.56,-0.22 L13.85,0.00 L12.91,0.00 L12.11,-0.26 L11.78,-0.57 L11.54,-1.04 L11.78,-0.57 L12.11,-0.26 L12.91,0.00 L13.85,0.00 L14.56,-0.22 L15.22,-0.78 L15.50,-1.52 L15.50,-2.13 L15.22,-2.87 L14.65,-3.40 L13.85,-3.66 L12.91,-3.66 L12.20,-3.44 L11.87,-3.18 L11.83,-3.22 L12.06,-5.27 L12.16,-5.49 L14.93,-5.49Z" stroke="#00ff00" fill="none" stroke-width="1.0" stroke-linejoin="round" stroke-linecap="round" style="stroke-width:1.0"/>
<path transform="translate(469.3,506.0) rotate(-90)" d="M1.84,-3.66 L2.73,-3.66 L3.20,-3.44 L3.82,-2.87 L4.10,-2.13 L4.10,-1.52 L3.82,-0.78 L3.20,-0.22 L2.73,0.00 L1.84,0.00 L1.27,-0.26 L0.71,-0.78 L0.42,-1.52 L0.42,-2.13 L0.71,-2.87 L1.27,-3.40 M1.84,-3.66 L1.27,-3.40 L0.71,-2.87 L0.42,-2.13 L0.42,-1.52 L0.71,-0.78 L1.27,-0.26 L1.84,0.00 L2.73,0.00 L3.20,-0.22 L3.82,-0.78 L4.10,-1.52 L4.10,-2.13 L3.82,-2.87 L3.20,-3.44 L2.73,-3.66 M0.00,0.65 L4.52,-4.31 M8.62,-5.40 L8.67,-1.87 L5.94,-1.83 L5.89,-1.92Z M8.67,-5.49 L5.84,-1.83 L8.62,-1.83 L8.67,0.00 L8.67,-1.79 L10.08,-1.83 L8.67,-1.87Z M12.11,-5.49 L11.83,-3.13 L12.11,-3.40 L12.91,-3.66 L13.85,-3.66 L14.65,-3.40 L15.26,-2.79 L15.50,-2.13 L15.50,-1.52 L15.22,-0.78 L14.56,-0.22 L13.85,0.00 L12.91,0.00 L12.11,-0.26 L11.78,-0.57 L11.54,-1.04 L11.78,-0.57 L12.11,-0.26 L12.91,0.00 L13.85,0.00 L14.56,-0.22 L15.22,-0.78 L15.50,-1.52 L15.50,-2.13 L15.22,-2.87 L14.65,-3.40 L13.85,-3.66 L12.91,-3.66 L12.20,-3.44 L11.87,-3.18 L11.83,-3.22 L12.06,-5.27 L12.16,-5.49 L14.93,-5.49Z" stroke="#00ff00" fill="none" stroke-width="1.0" stroke-linejoin="round" stroke-linecap="round" style="stroke-width:1.0"/>
<path transform="translate(464.8,488.0) rotate(-90)" d="M0.00,-1.19 L2.91,-1.19 M5.01,-2.79 L5.39,-2.79 L5.88,-2.63 L6.17,-2.26 L6.33,-1.64 L6.33,-1.15 L6.17,-0.53 L5.85,-0.13 L5.39,0.00 L5.01,0.00 L4.53,-0.15 L4.23,-0.53 L4.07,-1.15 L4.07,-1.64 L4.23,-2.26 L4.55,-2.65Z M5.01,-2.79 L4.55,-2.65 L4.23,-2.26 L4.07,-1.64 L4.07,-1.15 L4.23,-0.53 L4.53,-0.15 L5.01,0.00 L5.39,0.00 L5.85,-0.13 L6.17,-0.53 L6.33,-1.15 L6.33,-1.64 L6.17,-2.26 L5.88,-2.63 L5.39,-2.79Z M7.65,-0.27 L7.82,-0.13 L7.65,0.00 L7.49,-0.13Z M7.65,-0.27 L7.49,-0.13 L7.65,0.00 L7.82,-0.13Z M9.92,-2.79 L10.30,-2.79 L10.78,-2.63 L11.08,-2.26 L11.24,-1.64 L11.24,-1.15 L11.08,-0.53 L10.75,-0.13 L10.30,0.00 L9.92,0.00 L9.43,-0.15 L9.14,-0.53 L8.97,-1.15 L8.97,-1.64 L9.14,-2.26 L9.46,-2.65Z M9.92,-2.79 L9.46,-2.65 L9.14,-2.26 L8.97,-1.64 L8.97,-1.15 L9.14,-0.53 L9.43,-0.15 L9.92,0.00 L10.30,0.00 L10.75,-0.13 L11.08,-0.53 L11.24,-1.15 L11.24,-1.64 L11.08,-2.26 L10.78,-2.63 L10.30,-2.79Z M12.56,-2.79 L12.40,-1.59 L12.56,-1.73 L13.02,-1.86 L13.56,-1.86 L14.01,-1.73 L14.37,-1.42 L14.50,-1.08 L14.50,-0.77 L14.34,-0.40 L13.96,-0.11 L13.56,0.00 L13.02,0.00 L12.56,-0.13 L12.37,-0.29 L12.24,-0.53 L12.37,-0.29 L12.56,-0.13 L13.02,0.00 L13.56,0.00 L13.96,-0.11 L14.34,-0.40 L14.50,-0.77 L14.50,-1.08 L14.34,-1.46 L14.01,-1.73 L13.56,-1.86 L13.02,-1.86 L12.61,-1.75 L12.42,-1.61 L12.40,-1.64 L12.53,-2.68 L12.59,-2.79 L14.18,-2.79Z" stroke="#00ff00" fill="none" stroke-width="1.0" stroke-linejoin="round" stroke-linecap="round" style="stroke-width:1.0"/>
<path transform="translate(458.1,484.5) rotate(-90)" d="M0.83,-2.79 L1.17,-2.79 L1.60,-2.63 L1.86,-2.26 L2.00,-1.64 L2.00,-1.15 L1.86,-0.53 L1.57,-0.13 L1.17,0.00 L0.83,0.00 L0.40,-0.15 L0.14,-0.53 L0.00,-1.15 L0.00,-1.64 L0.14,-2.26 L0.43,-2.65Z M0.83,-2.79 L0.43,-2.65 L0.14,-2.26 L0.00,-1.64 L0.00,-1.15 L0.14,-0.53 L0.40,-0.15 L0.83,0.00 L1.17,0.00 L1.57,-0.13 L1.86,-0.53 L2.00,-1.15 L2.00,-1.64 L1.86,-2.26 L1.60,-2.63 L1.17,-2.79Z" stroke="#00ff00" fill="none" stroke-width="1.0" stroke-linejoin="round" stroke-linecap="round" style="stroke-width:1.0"/>
<line x1="517.7" y1="501" x2="479.3" y2="584.8" stroke="#ffff00" />
<polygon points="517.7,501 517.10,505.13 514.93,504.12" fill="#ffff00" stroke="none"/>
<path d="M475.7,584.8 L474.4,589.3 Q469.6,590.6 469.1,594.2 Q469.3,597.2 471.7,598.3 L473.7,598.6 L473.7,594.8 Q473.7,592.6 476.3,592.6 Q478.9,592.6 478.9,594.8 L478.9,598.6 L480.6,598.3 Q483,597.2 483.1,594.2 Q482.8,590.8 480.6,589.7 L480.2,584.8" stroke="#ffff00" fill="none" />
<line x1="473.5" y1="600" x2="473.5" y2="619.5" stroke="#00ff00" />
<line x1="478.7" y1="600" x2="478.7" y2="619.5" stroke="#00ff00" />
<line x1="454" y1="618.5" x2="489.5" y2="618.5" stroke="#00ff00" />
<polygon points="473.5,618.5 467.50,619.40 467.50,617.60" fill="#00ff00" stroke="none"/>
<polygon points="478.7,618.5 484.70,617.60 484.70,619.40" fill="#00ff00" stroke="none"/>
<path transform="translate(456.5,615.3)" d="M1.38,-6.34 L0.83,-6.04 L0.55,-5.73 L0.28,-5.13 L0.28,-4.83 L0.28,-5.13 L0.55,-5.73 L0.83,-6.04 L1.38,-6.34 L2.52,-6.34 L2.98,-6.09 L3.30,-5.73 L3.58,-5.13 L3.58,-4.48 L2.80,-3.07 L0.00,0.00 L3.85,0.00 L0.05,-0.05 L2.80,-3.07 L3.58,-4.48 L3.58,-5.13 L3.30,-5.73 L2.98,-6.09 L2.52,-6.34Z M6.92,-6.34 L6.37,-6.04 L6.10,-5.73 L5.82,-5.13 L5.82,-4.83 L5.82,-5.13 L6.10,-5.73 L6.37,-6.04 L6.92,-6.34 L8.07,-6.34 L8.53,-6.09 L8.85,-5.73 L9.12,-5.13 L9.12,-4.48 L8.35,-3.07 L5.55,0.00 L9.40,0.00 L5.59,-0.05 L8.35,-3.07 L9.12,-4.48 L9.12,-5.13 L8.85,-5.73 L8.53,-6.09 L8.07,-6.34Z" stroke="#00ff00" fill="none" stroke-width="1.0" stroke-linejoin="round" stroke-linecap="round" style="stroke-width:1.0"/>
<line x1="561.8" y1="509" x2="540" y2="618.5" stroke="#00ff00" />
<polygon points="561.9,508.4 562.39,513.09 559.65,512.54" fill="#00ff00" stroke="none"/>
<line x1="540" y1="618.5" x2="593.5" y2="618.5" stroke="#00ff00" />
<path transform="translate(549.5,615.3)" d="M1.47,-5.77 L0.88,-5.50 L0.59,-5.22 L0.29,-4.67 L0.29,-4.40 L0.29,-4.67 L0.59,-5.22 L0.88,-5.50 L1.47,-5.77 L2.69,-5.77 L3.18,-5.54 L3.52,-5.22 L3.81,-4.67 L3.81,-4.08 L2.98,-2.79 L0.00,0.00 L4.11,0.00 L0.05,-0.05 L2.98,-2.79 L3.81,-4.08 L3.81,-4.67 L3.52,-5.22 L3.18,-5.54 L2.69,-5.77Z M6.21,-2.47 L11.48,-2.47 M13.88,-5.72 L16.57,-5.77 L17.40,-5.50 L17.69,-5.22 L17.98,-4.67 L17.98,-3.80 L17.74,-3.34 L17.40,-3.02 L16.57,-2.75 L13.93,-2.75Z M17.40,-5.50 L16.57,-5.77 L13.88,-5.77 L13.88,0.00 L13.88,-2.70 L16.57,-2.75 L17.40,-3.02 L17.74,-3.34 L17.98,-3.80 L17.98,-4.67 L17.69,-5.22Z M23.31,-5.77 L19.21,-5.77 L21.26,-5.72 L21.26,0.00 L21.26,-5.72Z M25.12,-5.77 L28.30,-5.72 L26.59,-3.57 L27.52,-3.57 L28.00,-3.34 L28.35,-3.02 L28.64,-2.24 L28.64,-1.60 L28.39,-0.92 L27.66,-0.23 L26.93,0.00 L25.95,0.00 L25.12,-0.27 L24.78,-0.60 L24.53,-1.10 L24.78,-0.60 L25.12,-0.27 L25.95,0.00 L26.93,0.00 L27.66,-0.23 L28.35,-0.82 L28.64,-1.60 L28.64,-2.24 L28.35,-3.02 L28.00,-3.34 L27.52,-3.57 L26.64,-3.62 L28.35,-5.77Z M35.33,-6.73 L30.15,1.92 M37.24,-2.47 L37.83,-3.02 L38.85,-3.34 L39.20,-3.34 L40.08,-3.07 L40.76,-2.47 L41.05,-1.92 L41.05,-1.05 L40.81,-0.60 L40.47,-0.27 L39.64,0.00 L38.36,0.00 L37.63,-0.23 L37.19,-0.60 L36.95,-1.05 L36.95,-1.92Z M37.24,-4.95 L37.63,-5.54 L38.36,-5.77 L39.64,-5.77 L40.37,-5.54 L40.52,-5.40 L40.76,-4.95 L40.76,-4.35 L40.42,-3.80 L39.78,-3.53 L38.85,-3.39 L38.12,-3.57 L37.48,-3.89 L37.24,-4.35Z M38.36,-5.77 L37.53,-5.50 L37.24,-4.95 L37.24,-4.35 L37.53,-3.85 L38.12,-3.57 L38.80,-3.43 L38.85,-3.34 L37.83,-3.02 L37.24,-2.47 L36.95,-1.92 L36.95,-1.05 L37.19,-0.60 L37.63,-0.23 L38.36,0.00 L39.64,0.00 L40.47,-0.27 L40.81,-0.60 L41.05,-1.05 L41.05,-1.92 L40.76,-2.47 L40.17,-3.02 L39.24,-3.30 L39.20,-3.39 L39.93,-3.57 L40.52,-3.89 L40.76,-4.35 L40.76,-4.95 L40.37,-5.54 L39.64,-5.77Z M45.50,-5.77 L45.50,-3.85 M43.15,-5.77 L43.15,-3.85" stroke="#00ff00" fill="none" stroke-width="1.0" stroke-linejoin="round" stroke-linecap="round" style="stroke-width:1.0"/>
<path d="M116.30,385.30 L163.25,385.30 L163.25,388.80 A5.3,5.3 0 1 0 169.95,388.80 L169.95,385.30 L187.30,385.30 L187.30,389.80 L185.30,390.80 L185.30,393.30 L203.80,393.30 L203.80,386.30 L204.80,385.30 L208.40,385.30 L209.40,386.30 L209.40,393.30 L227.90,393.30 L227.90,390.80 L225.90,389.80 L225.90,385.30 L243.25,385.30 L243.25,388.80 A5.3,5.3 0 1 0 249.95,388.80 L249.95,385.30 L296.90,385.30 M101.40,580.80 L101.40,533.85 L104.90,533.85 A5.3,5.3 0 1 0 104.90,527.15 L101.40,527.15 L101.40,509.80 L105.90,509.80 L106.90,511.80 L109.40,511.80 L109.40,493.30 L102.40,493.30 L101.40,492.30 L101.40,488.70 L102.40,487.70 L109.40,487.70 L109.40,469.20 L106.90,469.20 L105.90,471.20 L101.40,471.20 L101.40,453.85 L104.90,453.85 A5.3,5.3 0 1 0 104.90,447.15 L101.40,447.15 L101.40,400.20 M296.90,595.30 L249.95,595.30 L249.95,591.80 A5.3,5.3 0 1 0 243.25,591.80 L243.25,595.30 L225.90,595.30 L225.90,590.80 L227.90,589.80 L227.90,588.50 L209.40,588.50 L209.40,594.30 L208.40,595.30 L204.80,595.30 L203.80,594.30 L203.80,588.50 L185.30,588.50 L185.30,589.80 L187.30,590.80 L187.30,595.30 L169.95,595.30 L169.95,591.80 A5.3,5.3 0 1 0 163.25,591.80 L163.25,595.30 L116.30,595.30 " stroke="#ffff00" fill="none" />
<path d="M116.3,385.3 L101.39999999999999,399.8 M101.39999999999999,580.8000000000001 L116.3,595.3000000000001 M296.90000000000003,385.3 L311.8,399.8 M311.8,580.8000000000001 L296.90000000000003,595.3000000000001" stroke="#ffff00" fill="none" />
<path d="M311.8,399.8 L311.8,447.15 L309.0,447.15 A5.3,5.3 0 1 0 309.0,453.85 L311.8,453.85 L311.8,459.2 L313.7,460.2 L332.8,463.3 L334.5,465.5 L334.5,515.6 L332.8,517.7 L313.7,520.7 L311.8,521.7 L311.8,527.15 L309.0,527.15 A5.3,5.3 0 1 0 309.0,533.85 L311.8,533.85 L311.8,580.8000000000001" stroke="#ffff00" fill="none" />
<line x1="334.5" y1="465.5" x2="329.7" y2="474" stroke="#ffff00" />
<line x1="334.5" y1="515.6" x2="329.7" y2="507" stroke="#ffff00" />
<circle cx="206.6" cy="490.5" r="87" stroke="#ffff00" fill="none" />
<circle cx="206.6" cy="490.5" r="50.5" stroke="#ffff00" fill="none" />
<circle cx="206.6" cy="490.5" r="28" stroke="#ffff00" fill="none" />
<circle cx="206.6" cy="490.5" r="14" stroke="#ffff00" fill="none" />
<line x1="193.4" y1="465.8" x2="219.79999999999998" y2="465.8" stroke="#ffff00" />
<line x1="193.4" y1="515.2" x2="219.79999999999998" y2="515.2" stroke="#ffff00" />
<line x1="181.9" y1="477.3" x2="181.9" y2="503.7" stroke="#ffff00" />
<line x1="231.29999999999998" y1="477.3" x2="231.29999999999998" y2="503.7" stroke="#ffff00" />
<path d="M190.82,494.14 A16.2,16.2 0 1 1 202.41,506.15" stroke="#00ff00" fill="none" />
<circle cx="124.4" cy="408.8" r="16" stroke="#ffff00" fill="none" />
<circle cx="124.4" cy="408.8" r="11.3" stroke="#ffff00" fill="none" />
<path d="M110.80,409.80 A13.6,13.6 0 1 1 122.40,422.25" stroke="#00ff00" fill="none" />
<line x1="106.4" y1="408.5" x2="142.4" y2="408.5" stroke="#ff0000" stroke-dasharray="8 2 1.5 2"/>
<line x1="124.5" y1="390.8" x2="124.5" y2="426.8" stroke="#ff0000" stroke-dasharray="8 2 1.5 2"/>
<circle cx="124.4" cy="573.2" r="16" stroke="#ffff00" fill="none" />
<circle cx="124.4" cy="573.2" r="11.3" stroke="#ffff00" fill="none" />
<path d="M110.80,574.20 A13.6,13.6 0 1 1 122.40,586.65" stroke="#00ff00" fill="none" />
<line x1="106.4" y1="573.5" x2="142.4" y2="573.5" stroke="#ff0000" stroke-dasharray="8 2 1.5 2"/>
<line x1="124.5" y1="555.2" x2="124.5" y2="591.2" stroke="#ff0000" stroke-dasharray="8 2 1.5 2"/>
<circle cx="289.4" cy="408.8" r="16" stroke="#ffff00" fill="none" />
<circle cx="289.4" cy="408.8" r="11.3" stroke="#ffff00" fill="none" />
<path d="M275.80,409.80 A13.6,13.6 0 1 1 287.40,422.25" stroke="#00ff00" fill="none" />
<line x1="271.4" y1="408.5" x2="307.4" y2="408.5" stroke="#ff0000" stroke-dasharray="8 2 1.5 2"/>
<line x1="289.5" y1="390.8" x2="289.5" y2="426.8" stroke="#ff0000" stroke-dasharray="8 2 1.5 2"/>
<circle cx="289.4" cy="573.2" r="16" stroke="#ffff00" fill="none" />
<circle cx="289.4" cy="573.2" r="11.3" stroke="#ffff00" fill="none" />
<path d="M275.80,574.20 A13.6,13.6 0 1 1 287.40,586.65" stroke="#00ff00" fill="none" />
<line x1="271.4" y1="573.5" x2="307.4" y2="573.5" stroke="#ff0000" stroke-dasharray="8 2 1.5 2"/>
<line x1="289.5" y1="555.2" x2="289.5" y2="591.2" stroke="#ff0000" stroke-dasharray="8 2 1.5 2"/>
<line x1="152.6" y1="392.5" x2="180.6" y2="392.5" stroke="#ff0000" stroke-dasharray="6 2 2 2"/>
<line x1="166.5" y1="376.8" x2="166.5" y2="405.8" stroke="#ff0000" stroke-dasharray="6 2 2 2"/>
<line x1="94.69999999999999" y1="450.5" x2="122.69999999999999" y2="450.5" stroke="#ff0000" stroke-dasharray="6 2 2 2"/>
<line x1="108.5" y1="436.5" x2="108.5" y2="464.5" stroke="#ff0000" stroke-dasharray="6 2 2 2"/>
<line x1="232.6" y1="392.5" x2="260.6" y2="392.5" stroke="#ff0000" stroke-dasharray="6 2 2 2"/>
<line x1="246.5" y1="376.8" x2="246.5" y2="405.8" stroke="#ff0000" stroke-dasharray="6 2 2 2"/>
<line x1="94.69999999999999" y1="530.5" x2="122.69999999999999" y2="530.5" stroke="#ff0000" stroke-dasharray="6 2 2 2"/>
<line x1="108.5" y1="516.5" x2="108.5" y2="544.5" stroke="#ff0000" stroke-dasharray="6 2 2 2"/>
<line x1="152.6" y1="588.5" x2="180.6" y2="588.5" stroke="#ff0000" stroke-dasharray="6 2 2 2"/>
<line x1="166.5" y1="576.7" x2="166.5" y2="608.7" stroke="#ff0000" stroke-dasharray="6 2 2 2"/>
<line x1="290.5" y1="450.5" x2="318.5" y2="450.5" stroke="#ff0000" stroke-dasharray="6 2 2 2"/>
<line x1="304.5" y1="436.5" x2="304.5" y2="464.5" stroke="#ff0000" stroke-dasharray="6 2 2 2"/>
<line x1="232.6" y1="588.5" x2="260.6" y2="588.5" stroke="#ff0000" stroke-dasharray="6 2 2 2"/>
<line x1="246.5" y1="576.7" x2="246.5" y2="608.7" stroke="#ff0000" stroke-dasharray="6 2 2 2"/>
<line x1="290.5" y1="530.5" x2="318.5" y2="530.5" stroke="#ff0000" stroke-dasharray="6 2 2 2"/>
<line x1="304.5" y1="516.5" x2="304.5" y2="544.5" stroke="#ff0000" stroke-dasharray="6 2 2 2"/>
<line x1="90.5" y1="490.5" x2="345" y2="490.5" stroke="#ff0000" stroke-dasharray="9.5 1.5 1 1.5"/>
<line x1="206.5" y1="373" x2="206.5" y2="609" stroke="#ff0000" stroke-dasharray="9.5 1.5 1 1.5"/>
<line x1="305.5" y1="475" x2="329.7" y2="475" stroke="#00ffff" stroke-dasharray="3 2" style="stroke-width:2"/>
<line x1="305.5" y1="506.3" x2="329.7" y2="506.3" stroke="#00ffff" stroke-dasharray="3 2" style="stroke-width:2"/>
<line x1="329.7" y1="475" x2="329.7" y2="506.5" stroke="#00ffff" stroke-dasharray="3 2"/>
<line x1="305.5" y1="475" x2="305.5" y2="486.5" stroke="#00ffff" stroke-dasharray="3 2"/>
<line x1="305.5" y1="494.3" x2="305.5" y2="506.5" stroke="#00ffff" stroke-dasharray="3 2"/>
<line x1="293.7" y1="486.5" x2="305.5" y2="486.5" stroke="#00ffff" stroke-dasharray="3 2"/>
<line x1="293.7" y1="494.3" x2="305.5" y2="494.3" stroke="#00ffff" stroke-dasharray="3 2"/>
<line x1="101.3" y1="343.5" x2="101.3" y2="399" stroke="#00ff00" />
<line x1="334.5" y1="343" x2="334.5" y2="459" stroke="#00ff00" />
<line x1="101.3" y1="345.5" x2="334.5" y2="345.5" stroke="#00ff00" />
<polygon points="101.3,345.5 106.30,344.00 106.30,347.00" fill="#00ff00" stroke="none"/>
<polygon points="334.5,345.5 329.50,347.00 329.50,344.00" fill="#00ff00" stroke="none"/>
<line x1="124.5" y1="361" x2="124.5" y2="388" stroke="#00ff00" />
<line x1="289.5" y1="361" x2="289.5" y2="388" stroke="#00ff00" />
<line x1="124.5" y1="363.5" x2="289.5" y2="363.5" stroke="#00ff00" />
<polygon points="124.5,363.5 129.50,362.00 129.50,365.00" fill="#00ff00" stroke="none"/>
<polygon points="289.5,363.5 284.50,365.00 284.50,362.00" fill="#00ff00" stroke="none"/>
<path transform="translate(210.5,342.3)" d="M1.43,-5.63 L0.53,-4.78 L0.00,-4.56 L0.53,-4.78 L1.39,-5.58 L1.43,-5.54 L1.43,0.00Z M6.59,-5.63 L7.26,-5.63 L8.12,-5.32 L8.65,-4.56 L8.93,-3.31 L8.93,-2.32 L8.65,-1.07 L8.07,-0.27 L7.26,0.00 L6.59,0.00 L5.73,-0.31 L5.21,-1.07 L4.92,-2.32 L4.92,-3.31 L5.21,-4.56 L5.78,-5.36Z M6.59,-5.63 L5.78,-5.36 L5.21,-4.56 L4.92,-3.31 L4.92,-2.32 L5.21,-1.07 L5.73,-0.31 L6.59,0.00 L7.26,0.00 L8.07,-0.27 L8.65,-1.07 L8.93,-2.32 L8.93,-3.31 L8.65,-4.56 L8.12,-5.32 L7.26,-5.63Z M13.52,-5.54 L13.57,-1.92 L10.80,-1.88 L10.75,-1.97Z M13.57,-5.63 L10.70,-1.88 L13.52,-1.88 L13.57,0.00 L13.57,-1.83 L15.00,-1.88 L13.57,-1.92Z" stroke="#00ff00" fill="none" stroke-width="1.0" stroke-linejoin="round" stroke-linecap="round" style="stroke-width:1.0"/>
<path transform="translate(201.5,360.1)" d="M4.18,-5.49 L0.00,-5.49 L4.18,-5.44 L1.19,0.00Z M8.96,-5.40 L9.01,-1.87 L6.12,-1.83 L6.07,-1.92Z M9.01,-5.49 L6.02,-1.83 L8.96,-1.83 L9.01,0.00 L9.01,-1.79 L10.50,-1.83 L9.01,-1.87Z" stroke="#00ff00" fill="none" stroke-width="1.0" stroke-linejoin="round" stroke-linecap="round" style="stroke-width:1.0"/>
<line x1="297.5" y1="385.5" x2="412" y2="385.5" stroke="#00ff00" />
<line x1="297.5" y1="595.3" x2="412" y2="595.3" stroke="#00ff00" />
<line x1="410" y1="385.5" x2="410" y2="595.3" stroke="#00ff00" />
<polygon points="410,385.5 411.50,390.50 408.50,390.50" fill="#00ff00" stroke="none"/>
<polygon points="410,595.3 408.50,590.30 411.50,590.30" fill="#00ff00" stroke="none"/>
<line x1="305" y1="408.5" x2="394.2" y2="408.5" stroke="#00ff00" />
<line x1="311.5" y1="573.2" x2="394.2" y2="573.2" stroke="#00ff00" />
<line x1="392.5" y1="408.5" x2="392.5" y2="573.2" stroke="#00ff00" />
<polygon points="392.5,408.5 394.00,413.50 391.00,413.50" fill="#00ff00" stroke="none"/>
<polygon points="392.5,573.2 391.00,568.20 394.00,568.20" fill="#00ff00" stroke="none"/>
<line x1="313.7" y1="447.5" x2="376.2" y2="447.5" stroke="#00ff00" />
<line x1="313.7" y1="534.5" x2="376.2" y2="534.5" stroke="#00ff00" />
<line x1="374.5" y1="447.5" x2="374.5" y2="534.5" stroke="#00ff00" />
<polygon points="374.5,447.5 376.00,452.50 373.00,452.50" fill="#00ff00" stroke="none"/>
<polygon points="374.5,534.5 373.00,529.50 376.00,529.50" fill="#00ff00" stroke="none"/>
<line x1="336.5" y1="460.5" x2="358" y2="460.5" stroke="#00ff00" />
<line x1="336.5" y1="520.5" x2="358" y2="520.5" stroke="#00ff00" />
<line x1="356.2" y1="460.5" x2="356.2" y2="520.5" stroke="#00ff00" />
<polygon points="356.2,460.5 357.70,465.50 354.70,465.50" fill="#00ff00" stroke="none"/>
<polygon points="356.2,520.5 354.70,515.50 357.70,515.50" fill="#00ff00" stroke="none"/>
<path transform="translate(353.3,499.5) rotate(-90)" d="M1.43,-5.49 L0.86,-5.22 L0.57,-4.96 L0.29,-4.44 L0.29,-4.18 L0.29,-4.44 L0.57,-4.96 L0.86,-5.22 L1.43,-5.49 L2.63,-5.49 L3.11,-5.27 L3.44,-4.96 L3.73,-4.44 L3.73,-3.88 L2.92,-2.66 L0.00,0.00 L4.02,0.00 L0.05,-0.04 L2.92,-2.66 L3.73,-3.88 L3.73,-4.44 L3.44,-4.96 L3.11,-5.27 L2.63,-5.49Z M7.74,-3.40 L8.13,-3.40 L8.94,-3.13 L9.51,-2.61 L9.80,-1.87 L9.80,-1.52 L9.51,-0.78 L8.94,-0.26 L8.13,0.00 L7.74,0.00 L6.93,-0.26 L6.36,-0.78 L6.07,-1.74 L6.36,-2.61 L6.93,-3.13Z M7.74,-5.49 L8.41,-5.49 L9.13,-5.27 L9.51,-4.70 L9.23,-5.22 L8.41,-5.49 L7.74,-5.49 L6.93,-5.22 L6.31,-4.31 L6.07,-3.22 L6.07,-1.74 L6.36,-0.78 L6.93,-0.26 L7.74,0.00 L8.13,0.00 L8.94,-0.26 L9.56,-0.87 L9.80,-1.52 L9.80,-1.87 L9.51,-2.61 L8.84,-3.18 L8.13,-3.40 L7.74,-3.40 L6.93,-3.13 L6.36,-2.61 L6.17,-2.05 L6.07,-2.05 L6.07,-3.22 L6.36,-4.44 L6.93,-5.22Z M12.14,-0.52 L12.43,-0.26 L12.14,0.00 L11.86,-0.26Z M12.14,-0.52 L11.86,-0.26 L12.14,0.00 L12.43,-0.26Z M14.77,-2.35 L15.34,-2.87 L16.35,-3.18 L16.68,-3.18 L17.54,-2.92 L18.21,-2.35 L18.50,-1.83 L18.50,-1.00 L18.26,-0.57 L17.93,-0.26 L17.11,0.00 L15.87,0.00 L15.15,-0.22 L14.72,-0.57 L14.48,-1.00 L14.48,-1.83Z M14.77,-4.70 L15.15,-5.27 L15.87,-5.49 L17.11,-5.49 L17.83,-5.27 L17.97,-5.14 L18.21,-4.70 L18.21,-4.14 L17.88,-3.61 L17.26,-3.35 L16.35,-3.22 L15.63,-3.40 L15.01,-3.70 L14.77,-4.14Z M15.87,-5.49 L15.06,-5.22 L14.77,-4.70 L14.77,-4.14 L15.06,-3.66 L15.63,-3.40 L16.30,-3.27 L16.35,-3.18 L15.34,-2.87 L14.77,-2.35 L14.48,-1.83 L14.48,-1.00 L14.72,-0.57 L15.15,-0.22 L15.87,0.00 L17.11,0.00 L17.93,-0.26 L18.26,-0.57 L18.50,-1.00 L18.50,-1.83 L18.21,-2.35 L17.64,-2.87 L16.73,-3.13 L16.68,-3.22 L17.40,-3.40 L17.97,-3.70 L18.21,-4.14 L18.21,-4.70 L17.83,-5.27 L17.11,-5.49Z" stroke="#00ff00" fill="none" stroke-width="1.0" stroke-linejoin="round" stroke-linecap="round" style="stroke-width:1.0"/>
<path transform="translate(371.6,499.5) rotate(-90)" d="M0.57,-5.49 L3.68,-5.44 L2.01,-3.40 L2.92,-3.40 L3.39,-3.18 L3.73,-2.87 L4.02,-2.13 L4.02,-1.52 L3.78,-0.87 L3.06,-0.22 L2.34,0.00 L1.39,0.00 L0.57,-0.26 L0.24,-0.57 L0.00,-1.04 L0.24,-0.57 L0.57,-0.26 L1.39,0.00 L2.34,0.00 L3.06,-0.22 L3.73,-0.78 L4.02,-1.52 L4.02,-2.13 L3.73,-2.87 L3.39,-3.18 L2.92,-3.40 L2.06,-3.44 L3.73,-5.49Z M6.07,-2.35 L6.64,-2.87 L7.65,-3.18 L7.98,-3.18 L8.84,-2.92 L9.51,-2.35 L9.80,-1.83 L9.80,-1.00 L9.56,-0.57 L9.23,-0.26 L8.41,0.00 L7.17,0.00 L6.45,-0.22 L6.02,-0.57 L5.78,-1.00 L5.78,-1.83Z M6.07,-4.70 L6.45,-5.27 L7.17,-5.49 L8.41,-5.49 L9.13,-5.27 L9.27,-5.14 L9.51,-4.70 L9.51,-4.14 L9.18,-3.61 L8.56,-3.35 L7.65,-3.22 L6.93,-3.40 L6.31,-3.70 L6.07,-4.14Z M7.17,-5.49 L6.36,-5.22 L6.07,-4.70 L6.07,-4.14 L6.36,-3.66 L6.93,-3.40 L7.60,-3.27 L7.65,-3.18 L6.64,-2.87 L6.07,-2.35 L5.78,-1.83 L5.78,-1.00 L6.02,-0.57 L6.45,-0.22 L7.17,0.00 L8.41,0.00 L9.23,-0.26 L9.56,-0.57 L9.80,-1.00 L9.80,-1.83 L9.51,-2.35 L8.94,-2.87 L8.03,-3.13 L7.98,-3.22 L8.70,-3.40 L9.27,-3.70 L9.51,-4.14 L9.51,-4.70 L9.13,-5.27 L8.41,-5.49Z M12.14,-0.52 L12.43,-0.26 L12.14,0.00 L11.86,-0.26Z M12.14,-0.52 L11.86,-0.26 L12.14,0.00 L12.43,-0.26Z M14.77,-2.35 L15.34,-2.87 L16.35,-3.18 L16.68,-3.18 L17.54,-2.92 L18.21,-2.35 L18.50,-1.83 L18.50,-1.00 L18.26,-0.57 L17.93,-0.26 L17.11,0.00 L15.87,0.00 L15.15,-0.22 L14.72,-0.57 L14.48,-1.00 L14.48,-1.83Z M14.77,-4.70 L15.15,-5.27 L15.87,-5.49 L17.11,-5.49 L17.83,-5.27 L17.97,-5.14 L18.21,-4.70 L18.21,-4.14 L17.88,-3.61 L17.26,-3.35 L16.35,-3.22 L15.63,-3.40 L15.01,-3.70 L14.77,-4.14Z M15.87,-5.49 L15.06,-5.22 L14.77,-4.70 L14.77,-4.14 L15.06,-3.66 L15.63,-3.40 L16.30,-3.27 L16.35,-3.18 L15.34,-2.87 L14.77,-2.35 L14.48,-1.83 L14.48,-1.00 L14.72,-0.57 L15.15,-0.22 L15.87,0.00 L17.11,0.00 L17.93,-0.26 L18.26,-0.57 L18.50,-1.00 L18.50,-1.83 L18.21,-2.35 L17.64,-2.87 L16.73,-3.13 L16.68,-3.22 L17.40,-3.40 L17.97,-3.70 L18.21,-4.14 L18.21,-4.70 L17.83,-5.27 L17.11,-5.49Z" stroke="#00ff00" fill="none" stroke-width="1.0" stroke-linejoin="round" stroke-linecap="round" style="stroke-width:1.0"/>
<path transform="translate(388.5,495.5) rotate(-90)" d="M3.78,-5.49 L0.00,-5.49 L3.78,-5.44 L1.08,0.00Z M8.10,-5.40 L8.15,-1.87 L5.54,-1.83 L5.49,-1.92Z M8.15,-5.49 L5.45,-1.83 L8.10,-1.83 L8.15,0.00 L8.15,-1.79 L9.50,-1.83 L8.15,-1.87Z" stroke="#00ff00" fill="none" stroke-width="1.0" stroke-linejoin="round" stroke-linecap="round" style="stroke-width:1.0"/>
<path transform="translate(406.7,495.5) rotate(-90)" d="M1.58,-5.49 L1.94,-5.49 L2.70,-5.22 L3.24,-4.70 L3.51,-3.70 L3.24,-2.87 L2.70,-2.35 L1.94,-2.09 L1.58,-2.09 L0.81,-2.35 L0.27,-2.87 L0.00,-3.61 L0.00,-3.96 L0.27,-4.70 L0.81,-5.22Z M1.58,-5.49 L0.81,-5.22 L0.23,-4.62 L0.00,-3.96 L0.00,-3.61 L0.27,-2.87 L0.90,-2.31 L1.58,-2.09 L1.94,-2.09 L2.70,-2.35 L3.24,-2.87 L3.42,-3.44 L3.51,-3.44 L3.51,-2.26 L3.24,-1.04 L2.70,-0.26 L1.94,0.00 L1.31,0.00 L0.50,-0.30 L0.27,-0.78 L0.54,-0.26 L1.31,0.00 L1.94,0.00 L2.70,-0.26 L3.29,-1.18 L3.51,-2.26 L3.51,-3.70 L3.24,-4.70 L2.70,-5.22 L1.94,-5.49Z M8.10,-5.40 L8.15,-1.87 L5.54,-1.83 L5.49,-1.92Z M8.15,-5.49 L5.45,-1.83 L8.10,-1.83 L8.15,0.00 L8.15,-1.79 L9.50,-1.83 L8.15,-1.87Z" stroke="#00ff00" fill="none" stroke-width="1.0" stroke-linejoin="round" stroke-linecap="round" style="stroke-width:1.0"/>
<line x1="218.2" y1="478.8" x2="366" y2="345.5" stroke="#00ff00" />
<polygon points="218.2,478.8 220.67,474.82 222.41,476.75" fill="#00ff00" stroke="none"/>
<line x1="366" y1="345.5" x2="429" y2="345.5" stroke="#00ff00" />
<path transform="translate(368.0,343.6)" d="M0.00,-4.92 L0.00,0.00 L0.04,-4.80 L1.97,0.00 L3.85,-4.76 L3.93,-4.76 L3.93,0.00 L3.93,-4.92 L1.97,-0.04Z M7.66,-4.92 L6.89,-4.18 L6.44,-3.98 L6.89,-4.18 L7.62,-4.88 L7.66,-4.84 L7.66,0.00Z M13.08,-4.84 L13.12,-1.68 L10.74,-1.64 L10.70,-1.72Z M13.12,-4.92 L10.66,-1.64 L13.08,-1.64 L13.12,0.00 L13.12,-1.60 L14.35,-1.64 L13.12,-1.68Z M15.62,-4.92 L17.34,-2.46 L15.62,0.00 L17.34,-2.46 L19.06,0.00 L17.34,-2.46 L19.06,-4.92 L17.34,-2.46Z M22.54,-4.92 L21.77,-4.18 L21.31,-3.98 L21.77,-4.18 L22.50,-4.88 L22.54,-4.84 L22.54,0.00Z M26.03,-0.47 L26.27,-0.23 L26.03,0.00 L25.78,-0.23Z M26.03,-0.47 L25.78,-0.23 L26.03,0.00 L26.27,-0.23Z M28.53,-4.92 L28.28,-2.81 L28.53,-3.04 L29.23,-3.28 L30.05,-3.28 L30.74,-3.04 L31.27,-2.50 L31.48,-1.91 L31.48,-1.37 L31.23,-0.70 L30.66,-0.20 L30.05,0.00 L29.23,0.00 L28.53,-0.23 L28.24,-0.51 L28.04,-0.94 L28.24,-0.51 L28.53,-0.23 L29.23,0.00 L30.05,0.00 L30.66,-0.20 L31.23,-0.70 L31.48,-1.37 L31.48,-1.91 L31.23,-2.58 L30.74,-3.04 L30.05,-3.28 L29.23,-3.28 L28.61,-3.08 L28.32,-2.85 L28.28,-2.89 L28.49,-4.72 L28.57,-4.92 L30.99,-4.92Z M34.23,-3.28 L35.00,-3.28 L35.41,-3.08 L35.95,-2.58 L36.19,-1.91 L36.19,-1.37 L35.95,-0.70 L35.41,-0.20 L35.00,0.00 L34.23,0.00 L33.73,-0.23 L33.24,-0.70 L33.24,-2.58 L33.73,-3.04Z M35.00,-3.28 L34.23,-3.28 L33.73,-3.04 L33.28,-2.62 L33.24,-3.28 L33.24,1.64 L33.28,-0.66 L33.73,-0.23 L34.23,0.00 L35.00,0.00 L35.41,-0.20 L35.99,-0.78 L36.19,-1.37 L36.19,-1.91 L35.99,-2.50 L35.41,-3.08Z M37.71,-4.92 L39.43,-2.46 L37.71,0.00 L39.43,-2.46 L41.15,0.00 L39.43,-2.46 L41.15,-4.92 L39.43,-2.46Z M43.90,-4.92 L43.41,-4.68 L43.16,-4.45 L42.92,-3.98 L42.92,-3.75 L42.92,-3.98 L43.16,-4.45 L43.41,-4.68 L43.90,-4.92 L44.92,-4.92 L45.33,-4.72 L45.62,-4.45 L45.87,-3.98 L45.87,-3.47 L45.17,-2.38 L42.67,0.00 L46.11,0.00 L42.71,-0.04 L45.17,-2.38 L45.87,-3.47 L45.87,-3.98 L45.62,-4.45 L45.33,-4.72 L44.92,-4.92Z M49.06,-4.92 L49.64,-4.92 L50.38,-4.64 L50.83,-3.98 L51.07,-2.89 L51.07,-2.03 L50.83,-0.94 L50.33,-0.23 L49.64,0.00 L49.06,0.00 L48.33,-0.27 L47.88,-0.94 L47.63,-2.03 L47.63,-2.89 L47.88,-3.98 L48.37,-4.68Z M49.06,-4.92 L48.37,-4.68 L47.88,-3.98 L47.63,-2.89 L47.63,-2.03 L47.88,-0.94 L48.33,-0.27 L49.06,0.00 L49.64,0.00 L50.33,-0.23 L50.83,-0.94 L51.07,-2.03 L51.07,-2.89 L50.83,-3.98 L50.38,-4.64 L49.64,-4.92Z M53.82,-3.28 L54.60,-3.28 L55.01,-3.08 L55.54,-2.58 L55.54,-0.70 L55.01,-0.20 L54.60,0.00 L53.82,0.00 L53.33,-0.23 L52.84,-0.70 L52.59,-1.37 L52.59,-1.91 L52.84,-2.58 L53.33,-3.04Z M55.54,-4.92 L55.50,-2.62 L55.01,-3.08 L54.60,-3.28 L53.82,-3.28 L53.33,-3.04 L52.79,-2.50 L52.59,-1.91 L52.59,-1.37 L52.79,-0.78 L53.33,-0.23 L53.82,0.00 L54.60,0.00 L55.01,-0.20 L55.50,-0.66 L55.54,0.00Z M58.53,-3.28 L59.31,-3.28 L59.72,-3.08 L60.25,-2.58 L60.50,-1.91 L60.50,-1.37 L60.25,-0.70 L59.72,-0.20 L59.31,0.00 L58.53,0.00 L58.04,-0.23 L57.55,-0.70 L57.55,-2.58 L58.04,-3.04Z M59.31,-3.28 L58.53,-3.28 L58.04,-3.04 L57.59,-2.62 L57.55,-3.28 L57.55,1.64 L57.59,-0.66 L58.04,-0.23 L58.53,0.00 L59.31,0.00 L59.72,-0.20 L60.30,-0.78 L60.50,-1.37 L60.50,-1.91 L60.30,-2.50 L59.72,-3.08Z" stroke="#00ff00" fill="none" stroke-width="1.0" stroke-linejoin="round" stroke-linecap="round" style="stroke-width:1.0"/>
<line x1="117.5" y1="584" x2="96" y2="618.5" stroke="#00ff00" />
<polygon points="117.5,583.9 116.23,588.41 114.02,587.04" fill="#00ff00" stroke="none"/>
<line x1="96" y1="618.5" x2="219.5" y2="618.5" stroke="#00ff00" />
<path transform="translate(111.9,615.6999999999999)" d="M2.34,-4.84 L2.38,-1.68 L0.08,-1.64 L0.04,-1.72Z M2.38,-4.92 L0.00,-1.64 L2.34,-1.64 L2.38,0.00 L2.38,-1.60 L3.57,-1.64 L2.38,-1.68Z M5.04,-2.11 L9.33,-2.11 M12.23,-3.28 L12.98,-3.28 L13.38,-3.08 L13.89,-2.58 L14.13,-1.91 L14.13,-1.37 L13.89,-0.70 L13.38,-0.20 L12.98,0.00 L12.23,0.00 L11.75,-0.23 L11.27,-0.70 L11.04,-1.37 L11.04,-1.91 L11.27,-2.58 L11.75,-3.04 M12.23,-3.28 L11.75,-3.04 L11.27,-2.58 L11.04,-1.91 L11.04,-1.37 L11.27,-0.70 L11.75,-0.23 L12.23,0.00 L12.98,0.00 L13.38,-0.20 L13.89,-0.70 L14.13,-1.37 L14.13,-1.91 L13.89,-2.58 L13.38,-3.08 L12.98,-3.28 M10.68,0.59 L14.49,-3.86 M17.51,-4.92 L16.75,-4.18 L16.31,-3.98 L16.75,-4.18 L17.47,-4.88 L17.51,-4.84 L17.51,0.00Z M21.79,-4.92 L22.35,-4.92 L23.06,-4.64 L23.50,-3.98 L23.74,-2.89 L23.74,-2.03 L23.50,-0.94 L23.02,-0.23 L22.35,0.00 L21.79,0.00 L21.08,-0.27 L20.64,-0.94 L20.40,-2.03 L20.40,-2.89 L20.64,-3.98 L21.12,-4.68Z M21.79,-4.92 L21.12,-4.68 L20.64,-3.98 L20.40,-2.89 L20.40,-2.03 L20.64,-0.94 L21.08,-0.27 L21.79,0.00 L22.35,0.00 L23.02,-0.23 L23.50,-0.94 L23.74,-2.03 L23.74,-2.89 L23.50,-3.98 L23.06,-4.64 L22.35,-4.92Z M25.68,-0.47 L25.92,-0.23 L25.68,0.00 L25.44,-0.23Z M25.68,-0.47 L25.44,-0.23 L25.68,0.00 L25.92,-0.23Z M29.97,-4.84 L30.01,-1.68 L27.71,-1.64 L27.67,-1.72Z M30.01,-4.92 L27.63,-1.64 L29.97,-1.64 L30.01,0.00 L30.01,-1.60 L31.20,-1.64 L30.01,-1.68Z" stroke="#00ff00" fill="none" stroke-width="1.0" stroke-linejoin="round" stroke-linecap="round" style="stroke-width:1.0"/>
<path transform="translate(147.5,615.6999999999999)" d="M1.28,-0.33 L1.50,-0.17 L1.28,0.00 L1.07,-0.17Z M1.28,-0.33 L1.07,-0.17 L1.28,0.00 L1.50,-0.17Z M1.75,-3.50 L0.86,-3.50 L0.43,-3.33 L0.21,-3.16 L0.00,-2.83 L0.00,-2.66 L0.00,-2.83 L0.21,-3.16 L0.43,-3.33 L0.86,-3.50 L1.75,-3.50 L2.11,-3.36 L2.36,-3.16 L2.57,-2.83 L2.57,-2.47 L2.39,-2.19 L2.11,-1.97 L1.28,-1.67 L1.28,-1.17 L1.28,-1.64 L2.11,-1.97 L2.39,-2.19 L2.57,-2.47 L2.57,-2.83 L2.36,-3.16 L2.11,-3.36Z M6.46,-3.50 L3.46,-3.50 L4.96,-3.47 L4.96,0.00 L4.96,-3.47Z M7.57,-3.50 L7.57,0.00 L7.57,-1.67 L8.21,-2.16 L8.64,-2.33 L9.31,-2.33 L9.67,-2.19 L9.92,-1.69 L9.92,0.00 L9.92,-1.69 L9.71,-2.16 L9.31,-2.33 L8.64,-2.33 L8.21,-2.16 L7.60,-1.69Z M13.38,-2.33 L12.74,-2.33 L12.31,-2.16 L11.88,-1.83 L11.71,-1.44 L11.67,-2.33 L11.67,0.00 L11.67,-1.36 L11.88,-1.83 L12.31,-2.16 L12.74,-2.33Z M14.49,-2.33 L14.49,-0.64 L14.70,-0.17 L15.13,0.00 L15.81,0.00 L16.17,-0.14 L16.81,-0.64 L16.85,0.00 L16.85,-2.33 L16.85,-0.67 L16.17,-0.14 L15.81,0.00 L15.13,0.00 L14.67,-0.22 L14.49,-0.64Z M18.59,-1.50 L22.45,-1.50 M24.20,-3.50 L24.20,0.00 L24.20,-1.67 L24.84,-2.16 L25.27,-2.33 L25.95,-2.33 L26.30,-2.19 L26.55,-1.69 L26.55,0.00 L26.55,-1.69 L26.34,-2.16 L25.95,-2.33 L25.27,-2.33 L24.84,-2.16 L24.23,-1.69Z M29.16,-2.33 L29.84,-2.33 L30.19,-2.19 L30.66,-1.83 L30.87,-1.36 L30.87,-0.97 L30.66,-0.50 L30.19,-0.14 L29.84,0.00 L29.16,0.00 L28.73,-0.17 L28.30,-0.50 L28.09,-0.97 L28.09,-1.36 L28.30,-1.83 L28.73,-2.16Z M29.16,-2.33 L28.73,-2.16 L28.30,-1.83 L28.09,-1.36 L28.09,-0.97 L28.30,-0.50 L28.73,-0.17 L29.16,0.00 L29.84,0.00 L30.19,-0.14 L30.66,-0.50 L30.87,-0.97 L30.87,-1.36 L30.66,-1.83 L30.19,-2.19 L29.84,-2.33Z M32.41,-3.50 L32.41,0.00 M33.94,-1.36 L34.15,-1.83 L34.58,-2.16 L35.01,-2.33 L35.69,-2.33 L36.05,-2.19 L36.30,-2.00 L36.51,-1.67 L36.47,-1.33Z M35.01,-2.33 L34.58,-2.16 L34.15,-1.83 L33.94,-1.36 L33.94,-0.97 L34.15,-0.50 L34.58,-0.17 L35.01,0.00 L35.69,0.00 L36.05,-0.14 L36.51,-0.50 L36.05,-0.14 L35.69,0.00 L35.01,0.00 L34.58,-0.17 L34.15,-0.50 L33.94,-0.97 L33.98,-1.33 L36.51,-1.33 L36.51,-1.67 L36.30,-2.00 L36.05,-2.19 L35.69,-2.33Z M39.12,-0.33 L39.33,-0.17 L39.12,0.00 L38.90,-0.17Z M39.12,-0.33 L38.90,-0.17 L39.12,0.00 L39.33,-0.17Z M39.58,-3.50 L38.69,-3.50 L38.26,-3.33 L38.04,-3.16 L37.83,-2.83 L37.83,-2.66 L37.83,-2.83 L38.04,-3.16 L38.26,-3.33 L38.69,-3.50 L39.58,-3.50 L39.94,-3.36 L40.19,-3.16 L40.40,-2.83 L40.40,-2.47 L40.22,-2.19 L39.94,-1.97 L39.12,-1.67 L39.12,-1.17 L39.12,-1.64 L39.94,-1.97 L40.22,-2.19 L40.40,-2.47 L40.40,-2.83 L40.19,-3.16 L39.94,-3.36Z" stroke="#00ff00" fill="none" stroke-width="1.0" stroke-linejoin="round" stroke-linecap="round" style="stroke-width:1.0"/>
<path transform="translate(111.9,625.1999999999999)" d="M1.04,-3.50 L1.96,-3.50 L2.57,-3.33 L3.00,-3.00 L2.57,-3.33 L1.96,-3.50 L1.04,-3.50 L0.43,-3.33 L0.00,-3.00 L0.00,-2.64 L0.18,-2.36 L0.43,-2.16 L0.93,-1.97 L2.18,-1.67 L2.54,-1.53 L2.79,-1.33 L3.00,-1.00 L3.00,-0.50 L2.57,-0.17 L1.96,0.00 L1.04,0.00 L0.43,-0.17 L0.00,-0.50 L0.43,-0.17 L1.04,0.00 L1.96,0.00 L2.57,-0.17 L3.00,-0.50 L3.00,-1.00 L2.79,-1.33 L2.54,-1.53 L2.18,-1.67 L0.93,-1.97 L0.43,-2.16 L0.18,-2.36 L0.00,-2.64 L0.00,-3.00 L0.43,-3.33Z M5.39,-2.33 L6.07,-2.33 L6.43,-2.19 L6.89,-1.83 L7.11,-1.36 L7.11,-0.97 L6.89,-0.50 L6.43,-0.14 L6.07,0.00 L5.39,0.00 L4.96,-0.17 L4.53,-0.50 L4.53,-1.83 L4.96,-2.16Z M6.07,-2.33 L5.39,-2.33 L4.96,-2.16 L4.57,-1.86 L4.53,-2.33 L4.53,1.17 L4.57,-0.47 L4.96,-0.17 L5.39,0.00 L6.07,0.00 L6.43,-0.14 L6.93,-0.56 L7.11,-0.97 L7.11,-1.36 L6.93,-1.78 L6.43,-2.19Z M9.50,-2.33 L10.18,-2.33 L10.53,-2.19 L11.00,-1.83 L11.21,-1.36 L11.21,-0.97 L11.00,-0.50 L10.53,-0.14 L10.18,0.00 L9.50,0.00 L9.07,-0.17 L8.64,-0.50 L8.43,-0.97 L8.43,-1.36 L8.64,-1.83 L9.07,-2.16Z M9.50,-2.33 L9.07,-2.16 L8.64,-1.83 L8.43,-1.36 L8.43,-0.97 L8.64,-0.50 L9.07,-0.17 L9.50,0.00 L10.18,0.00 L10.53,-0.14 L11.00,-0.50 L11.21,-0.97 L11.21,-1.36 L11.00,-1.83 L10.53,-2.19 L10.18,-2.33Z M12.96,-3.50 L12.96,-2.36 L12.32,-2.33 L12.96,-2.30 L12.96,-0.64 L13.18,-0.17 L13.60,0.00 L14.03,0.00 L13.60,0.00 L13.25,-0.14 L13.14,-0.22 L12.96,-0.64 L12.96,-2.30 L13.82,-2.33 L12.96,-2.36Z M20.07,-3.50 L19.64,-3.50 L19.21,-3.33 L19.00,-2.86 L19.00,-2.36 L18.35,-2.33 L19.00,-2.30 L19.00,0.00 L19.00,-2.30 L19.85,-2.33 L19.03,-2.33 L19.00,-2.86 L19.17,-3.28 L19.28,-3.36 L19.64,-3.50Z M22.25,-2.33 L22.92,-2.33 L23.28,-2.19 L23.75,-1.83 L23.75,-0.50 L23.28,-0.14 L22.92,0.00 L22.25,0.00 L21.82,-0.17 L21.39,-0.50 L21.17,-0.97 L21.17,-1.36 L21.39,-1.83 L21.82,-2.16Z M21.82,-2.16 L21.39,-1.83 L21.17,-1.36 L21.17,-0.97 L21.39,-0.50 L21.82,-0.17 L22.25,0.00 L22.92,0.00 L23.28,-0.14 L23.71,-0.47 L23.75,0.00 L23.75,-2.33 L23.71,-1.86 L23.28,-2.19 L22.92,-2.33 L22.25,-2.33Z M26.35,-2.33 L27.03,-2.33 L27.39,-2.19 L27.85,-1.83 L27.39,-2.19 L27.03,-2.33 L26.35,-2.33 L25.92,-2.16 L25.50,-1.83 L25.28,-1.36 L25.28,-0.97 L25.50,-0.50 L25.92,-0.17 L26.35,0.00 L27.03,0.00 L27.39,-0.14 L27.85,-0.50 L27.39,-0.14 L27.03,0.00 L26.35,0.00 L25.92,-0.17 L25.50,-0.50 L25.28,-0.97 L25.28,-1.36 L25.50,-1.83 L25.92,-2.16Z M29.39,-2.33 L29.39,0.00 M29.39,-3.66 L29.60,-3.50 L29.39,-3.33 L29.17,-3.50Z M29.39,-3.66 L29.17,-3.50 L29.39,-3.33 L29.60,-3.50Z M31.14,-2.33 L31.14,0.00 L31.14,-1.67 L31.78,-2.16 L32.21,-2.33 L32.89,-2.33 L33.24,-2.19 L33.49,-1.69 L33.49,0.00 L33.49,-1.69 L33.28,-2.16 L32.89,-2.33 L32.21,-2.33 L31.78,-2.16 L31.17,-1.69Z M36.10,-2.33 L36.78,-2.33 L37.14,-2.19 L37.60,-1.83 L37.60,-0.50 L37.14,-0.14 L36.78,0.00 L36.10,0.00 L35.67,-0.17 L35.24,-0.50 L35.03,-0.97 L35.03,-1.36 L35.24,-1.83 L35.67,-2.16Z M37.60,-2.33 L37.56,-1.86 L37.14,-2.19 L36.78,-2.33 L36.10,-2.33 L35.67,-2.16 L35.21,-1.78 L35.03,-1.36 L35.03,-0.97 L35.24,-0.50 L35.67,-0.17 L36.10,0.00 L36.78,0.00 L37.14,-0.14 L37.56,-0.47 L37.60,-0.44 L37.60,0.36 L37.39,0.83 L37.14,1.03 L36.78,1.17 L36.10,1.17 L35.67,1.00 L36.10,1.17 L36.78,1.17 L37.14,1.03 L37.42,0.78 L37.60,0.36Z" stroke="#00ff00" fill="none" stroke-width="1.0" stroke-linejoin="round" stroke-linecap="round" style="stroke-width:1.0"/>
<path transform="translate(159.5,625.3)" d="M0.00,-4.78 L0.00,0.00 L0.04,-4.66 L1.87,0.00 L3.66,-4.62 L3.73,-4.62 L3.73,0.00 L3.73,-4.78 L1.87,-0.04Z M7.27,-4.78 L6.53,-4.06 L6.11,-3.87 L6.53,-4.06 L7.23,-4.74 L7.27,-4.70 L7.27,0.00Z M11.28,-4.78 L10.81,-4.55 L10.58,-4.32 L10.35,-3.87 L10.35,-3.64 L10.35,-3.87 L10.58,-4.32 L10.81,-4.55 L11.28,-4.78 L12.25,-4.78 L12.64,-4.59 L12.91,-4.32 L13.15,-3.87 L13.15,-3.37 L12.48,-2.31 L10.11,0.00 L13.38,0.00 L10.15,-0.04 L12.48,-2.31 L13.15,-3.37 L13.15,-3.87 L12.91,-4.32 L12.64,-4.59 L12.25,-4.78Z M14.82,-4.78 L16.45,-2.39 L14.82,0.00 L16.45,-2.39 L18.09,0.00 L16.45,-2.39 L18.09,-4.78 L16.45,-2.39Z M21.39,-4.78 L20.65,-4.06 L20.22,-3.87 L20.65,-4.06 L21.35,-4.74 L21.39,-4.70 L21.39,0.00Z M31.23,-4.78 L27.96,-4.78 L31.23,-4.74 L28.90,0.00Z M33.14,-4.78 L32.90,-2.73 L33.14,-2.96 L33.80,-3.18 L34.58,-3.18 L35.24,-2.96 L35.74,-2.43 L35.94,-1.86 L35.94,-1.33 L35.70,-0.68 L35.16,-0.19 L34.58,0.00 L33.80,0.00 L33.14,-0.23 L32.86,-0.49 L32.67,-0.91 L32.86,-0.49 L33.14,-0.23 L33.80,0.00 L34.58,0.00 L35.16,-0.19 L35.70,-0.68 L35.94,-1.33 L35.94,-1.86 L35.70,-2.50 L35.24,-2.96 L34.58,-3.18 L33.80,-3.18 L33.21,-2.99 L32.94,-2.77 L32.90,-2.80 L33.10,-4.59 L33.18,-4.78 L35.47,-4.78Z M37.38,-4.78 L39.01,-2.39 L37.38,0.00 L39.01,-2.39 L40.64,0.00 L39.01,-2.39 L40.64,-4.78 L39.01,-2.39Z M43.95,-4.78 L43.21,-4.06 L42.78,-3.87 L43.21,-4.06 L43.91,-4.74 L43.95,-4.70 L43.95,0.00Z M47.95,-4.78 L47.49,-4.55 L47.25,-4.32 L47.02,-3.87 L47.02,-3.64 L47.02,-3.87 L47.25,-4.32 L47.49,-4.55 L47.95,-4.78 L48.93,-4.78 L49.32,-4.59 L49.59,-4.32 L49.82,-3.87 L49.82,-3.37 L49.16,-2.31 L46.79,0.00 L50.05,0.00 L46.83,-0.04 L49.16,-2.31 L49.82,-3.37 L49.82,-3.87 L49.59,-4.32 L49.32,-4.59 L48.93,-4.78Z M52.66,-3.18 L53.40,-3.18 L53.79,-2.99 L54.29,-2.50 L54.29,-0.68 L53.79,-0.19 L53.40,0.00 L52.66,0.00 L52.19,-0.23 L51.73,-0.68 L51.49,-1.33 L51.49,-1.86 L51.73,-2.50 L52.19,-2.96Z M54.29,-4.78 L54.26,-2.54 L53.79,-2.99 L53.40,-3.18 L52.66,-3.18 L52.19,-2.96 L51.69,-2.43 L51.49,-1.86 L51.49,-1.33 L51.69,-0.76 L52.19,-0.23 L52.66,0.00 L53.40,0.00 L53.79,-0.19 L54.26,-0.64 L54.29,0.00Z M57.13,-3.18 L57.87,-3.18 L58.26,-2.99 L58.77,-2.50 L59.00,-1.86 L59.00,-1.33 L58.77,-0.68 L58.26,-0.19 L57.87,0.00 L57.13,0.00 L56.67,-0.23 L56.20,-0.68 L56.20,-2.50 L56.67,-2.96Z M57.87,-3.18 L57.13,-3.18 L56.67,-2.96 L56.24,-2.54 L56.20,-3.18 L56.20,1.59 L56.24,-0.64 L56.67,-0.23 L57.13,0.00 L57.87,0.00 L58.26,-0.19 L58.81,-0.76 L59.00,-1.33 L59.00,-1.86 L58.81,-2.43 L58.26,-2.99Z" stroke="#00ff00" fill="none" stroke-width="1.0" stroke-linejoin="round" stroke-linecap="round" style="stroke-width:1.0"/>
<path transform="translate(113.5,633.3)" d="M1.04,-2.33 L1.70,-2.33 L2.05,-2.19 L2.50,-1.83 L2.50,-0.50 L2.05,-0.14 L1.70,0.00 L1.04,0.00 L0.63,-0.17 L0.21,-0.50 L0.00,-0.97 L0.00,-1.36 L0.21,-1.83 L0.63,-2.16Z M0.63,-2.16 L0.21,-1.83 L0.00,-1.36 L0.00,-0.97 L0.21,-0.50 L0.63,-0.17 L1.04,0.00 L1.70,0.00 L2.05,-0.14 L2.47,-0.47 L2.50,0.00 L2.50,-2.33 L2.47,-1.86 L2.05,-2.19 L1.70,-2.33 L1.04,-2.33Z M4.21,-2.33 L4.21,0.00 L4.21,-1.67 L4.83,-2.16 L5.25,-2.33 L5.91,-2.33 L6.26,-2.19 L6.50,-1.69 L6.50,0.00 L6.50,-1.69 L6.29,-2.16 L5.91,-2.33 L5.25,-2.33 L4.83,-2.16 L4.24,-1.69Z M9.04,-2.33 L9.70,-2.33 L10.05,-2.19 L10.50,-1.83 L10.50,-0.50 L10.05,-0.14 L9.70,0.00 L9.04,0.00 L8.62,-0.17 L8.21,-0.50 L8.00,-0.97 L8.00,-1.36 L8.21,-1.83 L8.62,-2.16Z M10.50,-3.50 L10.47,-1.86 L10.05,-2.19 L9.70,-2.33 L9.04,-2.33 L8.62,-2.16 L8.17,-1.78 L8.00,-1.36 L8.00,-0.97 L8.17,-0.56 L8.62,-0.17 L9.04,0.00 L9.70,0.00 L10.05,-0.14 L10.47,-0.47 L10.50,0.00Z" stroke="#00ff00" fill="none" stroke-width="1.0" stroke-linejoin="round" stroke-linecap="round" style="stroke-width:1.0"/>
<path transform="translate(128.3,634.5)" d="M1.53,-3.18 L2.27,-3.18 L2.66,-2.99 L3.17,-2.50 L3.40,-1.86 L3.40,-1.33 L3.17,-0.68 L2.66,-0.19 L2.27,0.00 L1.53,0.00 L1.06,-0.23 L0.59,-0.68 L0.35,-1.33 L0.35,-1.86 L0.59,-2.50 L1.06,-2.96 M1.53,-3.18 L1.06,-2.96 L0.59,-2.50 L0.35,-1.86 L0.35,-1.33 L0.59,-0.68 L1.06,-0.23 L1.53,0.00 L2.27,0.00 L2.66,-0.19 L3.17,-0.68 L3.40,-1.33 L3.40,-1.86 L3.17,-2.50 L2.66,-2.99 L2.27,-3.18 M0.00,0.57 L3.76,-3.75 M6.73,-4.78 L5.99,-4.06 L5.56,-3.87 L5.99,-4.06 L6.69,-4.74 L6.73,-4.70 L6.73,0.00Z M11.90,-4.70 L11.93,-1.63 L9.67,-1.59 L9.63,-1.67Z M11.93,-4.78 L9.59,-1.59 L11.90,-1.59 L11.93,0.00 L11.93,-1.55 L13.11,-1.59 L11.93,-1.63Z M14.32,-4.78 L15.97,-2.39 L14.32,0.00 L15.97,-2.39 L17.61,0.00 L15.97,-2.39 L17.61,-4.78 L15.97,-2.39Z M20.93,-4.78 L20.19,-4.06 L19.76,-3.87 L20.19,-4.06 L20.90,-4.74 L20.93,-4.70 L20.93,0.00Z M25.16,-4.78 L25.71,-4.78 L26.41,-4.51 L26.84,-3.87 L27.08,-2.80 L27.08,-1.97 L26.84,-0.91 L26.37,-0.23 L25.71,0.00 L25.16,0.00 L24.46,-0.27 L24.03,-0.91 L23.79,-1.97 L23.79,-2.80 L24.03,-3.87 L24.50,-4.55Z M25.16,-4.78 L24.50,-4.55 L24.03,-3.87 L23.79,-2.80 L23.79,-1.97 L24.03,-0.91 L24.46,-0.27 L25.16,0.00 L25.71,0.00 L26.37,-0.23 L26.84,-0.91 L27.08,-1.97 L27.08,-2.80 L26.84,-3.87 L26.41,-4.51 L25.71,-4.78Z M29.00,-0.45 L29.23,-0.23 L29.00,0.00 L28.76,-0.23Z M29.00,-0.45 L28.76,-0.23 L29.00,0.00 L29.23,-0.23Z M31.38,-4.78 L31.15,-2.73 L31.38,-2.96 L32.05,-3.18 L32.83,-3.18 L33.50,-2.96 L34.00,-2.43 L34.20,-1.86 L34.20,-1.33 L33.97,-0.68 L33.42,-0.19 L32.83,0.00 L32.05,0.00 L31.38,-0.23 L31.11,-0.49 L30.91,-0.91 L31.11,-0.49 L31.38,-0.23 L32.05,0.00 L32.83,0.00 L33.42,-0.19 L33.97,-0.68 L34.20,-1.33 L34.20,-1.86 L33.97,-2.50 L33.50,-2.96 L32.83,-3.18 L32.05,-3.18 L31.46,-2.99 L31.19,-2.77 L31.15,-2.80 L31.34,-4.59 L31.42,-4.78 L33.73,-4.78Z M36.82,-3.18 L37.57,-3.18 L37.96,-2.99 L38.47,-2.50 L38.47,-0.68 L37.96,-0.19 L37.57,0.00 L36.82,0.00 L36.35,-0.23 L35.88,-0.68 L35.65,-1.33 L35.65,-1.86 L35.88,-2.50 L36.35,-2.96Z M38.47,-4.78 L38.43,-2.54 L37.96,-2.99 L37.57,-3.18 L36.82,-3.18 L36.35,-2.96 L35.84,-2.43 L35.65,-1.86 L35.65,-1.33 L35.84,-0.76 L36.35,-0.23 L36.82,0.00 L37.57,0.00 L37.96,-0.19 L38.43,-0.64 L38.47,0.00Z M41.32,-3.18 L42.07,-3.18 L42.46,-2.99 L42.97,-2.50 L43.20,-1.86 L43.20,-1.33 L42.97,-0.68 L42.46,-0.19 L42.07,0.00 L41.32,0.00 L40.85,-0.23 L40.38,-0.68 L40.38,-2.50 L40.85,-2.96Z M42.07,-3.18 L41.32,-3.18 L40.85,-2.96 L40.42,-2.54 L40.38,-3.18 L40.38,1.59 L40.42,-0.64 L40.85,-0.23 L41.32,0.00 L42.07,0.00 L42.46,-0.19 L43.00,-0.76 L43.20,-1.33 L43.20,-1.86 L43.00,-2.43 L42.46,-2.99Z" stroke="#00ff00" fill="none" stroke-width="1.0" stroke-linejoin="round" stroke-linecap="round" style="stroke-width:1.0"/>
<path transform="translate(177.3,635.3)" d="M1.25,-0.33 L1.46,-0.17 L1.25,0.00 L1.04,-0.17Z M1.25,-0.33 L1.04,-0.17 L1.25,0.00 L1.46,-0.17Z M1.70,-3.50 L0.83,-3.50 L0.42,-3.33 L0.21,-3.16 L0.00,-2.83 L0.00,-2.66 L0.00,-2.83 L0.21,-3.16 L0.42,-3.33 L0.83,-3.50 L1.70,-3.50 L2.05,-3.36 L2.29,-3.16 L2.50,-2.83 L2.50,-2.47 L2.33,-2.19 L2.05,-1.97 L1.25,-1.67 L1.25,-1.17 L1.25,-1.64 L2.05,-1.97 L2.33,-2.19 L2.50,-2.47 L2.50,-2.83 L2.29,-3.16 L2.05,-3.36Z M3.99,-1.80 L5.91,-1.83 L6.50,-1.67 L6.70,-1.50 L6.91,-1.17 L6.91,-0.64 L6.74,-0.36 L6.50,-0.17 L5.91,0.00 L4.03,0.00Z M3.99,-3.47 L5.91,-3.50 L6.50,-3.33 L6.70,-3.16 L6.91,-2.83 L6.91,-2.47 L6.74,-2.19 L6.50,-2.00 L5.91,-1.83 L4.03,-1.83Z M3.99,-3.50 L3.99,0.00 L5.91,0.00 L6.50,-0.17 L6.74,-0.36 L6.91,-0.64 L6.91,-1.17 L6.70,-1.50 L6.50,-1.67 L5.91,-1.83 L6.50,-2.00 L6.74,-2.19 L6.91,-2.47 L6.91,-2.83 L6.70,-3.16 L6.50,-3.33 L5.91,-3.50Z M9.24,-2.33 L9.90,-2.33 L10.25,-2.19 L10.70,-1.83 L10.91,-1.36 L10.91,-0.97 L10.70,-0.50 L10.25,-0.14 L9.90,0.00 L9.24,0.00 L8.82,-0.17 L8.41,-0.50 L8.20,-0.97 L8.20,-1.36 L8.41,-1.83 L8.82,-2.16Z M9.24,-2.33 L8.82,-2.16 L8.41,-1.83 L8.20,-1.36 L8.20,-0.97 L8.41,-0.50 L8.82,-0.17 L9.24,0.00 L9.90,0.00 L10.25,-0.14 L10.70,-0.50 L10.91,-0.97 L10.91,-1.36 L10.70,-1.83 L10.25,-2.19 L9.90,-2.33Z M12.61,-3.50 L12.61,-2.36 L11.98,-2.33 L12.61,-2.30 L12.61,-0.64 L12.82,-0.17 L13.24,0.00 L13.65,0.00 L13.24,0.00 L12.89,-0.14 L12.78,-0.22 L12.61,-0.64 L12.61,-2.30 L13.44,-2.33 L12.61,-2.36Z M14.94,-3.50 L14.94,0.00 L14.94,-1.67 L15.56,-2.16 L15.98,-2.33 L16.64,-2.33 L16.99,-2.19 L17.23,-1.69 L17.23,0.00 L17.23,-1.69 L17.02,-2.16 L16.64,-2.33 L15.98,-2.33 L15.56,-2.16 L14.97,-1.69Z M22.27,-2.16 L22.06,-1.83 L22.27,-1.50 L22.79,-1.30 L23.76,-1.17 L24.14,-1.00 L24.35,-0.67 L24.35,-0.47 L24.14,-0.17 L23.55,0.00 L22.86,0.00 L22.23,-0.19 L22.06,-0.50 L22.23,-0.19 L22.86,0.00 L23.55,0.00 L24.14,-0.17 L24.35,-0.47 L24.35,-0.67 L24.11,-1.03 L23.76,-1.17 L22.68,-1.33 L22.27,-1.50 L22.06,-1.80 L22.34,-2.19 L22.86,-2.33 L23.55,-2.33 L24.07,-2.19 L24.35,-1.83 L24.14,-2.16 L23.55,-2.33 L22.86,-2.33Z M25.85,-2.33 L25.85,0.00 M25.85,-3.66 L26.05,-3.50 L25.85,-3.33 L25.64,-3.50Z M25.85,-3.66 L25.64,-3.50 L25.85,-3.33 L26.05,-3.50Z M28.38,-2.33 L29.04,-2.33 L29.39,-2.19 L29.84,-1.83 L29.84,-0.50 L29.39,-0.14 L29.04,0.00 L28.38,0.00 L27.96,-0.17 L27.55,-0.50 L27.34,-0.97 L27.34,-1.36 L27.55,-1.83 L27.96,-2.16Z M29.84,-3.50 L29.81,-1.86 L29.39,-2.19 L29.04,-2.33 L28.38,-2.33 L27.96,-2.16 L27.51,-1.78 L27.34,-1.36 L27.34,-0.97 L27.51,-0.56 L27.96,-0.17 L28.38,0.00 L29.04,0.00 L29.39,-0.14 L29.81,-0.47 L29.84,0.00Z M31.33,-1.36 L31.54,-1.83 L31.96,-2.16 L32.38,-2.33 L33.04,-2.33 L33.38,-2.19 L33.63,-2.00 L33.84,-1.67 L33.80,-1.33Z M32.38,-2.33 L31.96,-2.16 L31.54,-1.83 L31.33,-1.36 L31.33,-0.97 L31.54,-0.50 L31.96,-0.17 L32.38,0.00 L33.04,0.00 L33.38,-0.14 L33.84,-0.50 L33.38,-0.14 L33.04,0.00 L32.38,0.00 L31.96,-0.17 L31.54,-0.50 L31.33,-0.97 L31.37,-1.33 L33.84,-1.33 L33.84,-1.67 L33.63,-2.00 L33.38,-2.19 L33.04,-2.33Z M35.33,-2.16 L35.12,-1.83 L35.33,-1.50 L35.85,-1.30 L36.82,-1.17 L37.21,-1.00 L37.41,-0.67 L37.41,-0.47 L37.21,-0.17 L36.61,0.00 L35.92,0.00 L35.29,-0.19 L35.12,-0.50 L35.29,-0.19 L35.92,0.00 L36.61,0.00 L37.21,-0.17 L37.41,-0.47 L37.41,-0.67 L37.17,-1.03 L36.82,-1.17 L35.75,-1.33 L35.33,-1.50 L35.12,-1.80 L35.40,-2.19 L35.92,-2.33 L36.61,-2.33 L37.14,-2.19 L37.41,-1.83 L37.21,-2.16 L36.61,-2.33 L35.92,-2.33Z M39.95,-0.33 L40.16,-0.17 L39.95,0.00 L39.74,-0.17Z M39.95,-0.33 L39.74,-0.17 L39.95,0.00 L40.16,-0.17Z M40.40,-3.50 L39.53,-3.50 L39.12,-3.33 L38.91,-3.16 L38.70,-2.83 L38.70,-2.66 L38.70,-2.83 L38.91,-3.16 L39.12,-3.33 L39.53,-3.50 L40.40,-3.50 L40.75,-3.36 L40.99,-3.16 L41.20,-2.83 L41.20,-2.47 L41.03,-2.19 L40.75,-1.97 L39.95,-1.67 L39.95,-1.17 L39.95,-1.64 L40.75,-1.97 L41.03,-2.19 L41.20,-2.47 L41.20,-2.83 L40.99,-3.16 L40.75,-3.36Z" stroke="#00ff00" fill="none" stroke-width="1.0" stroke-linejoin="round" stroke-linecap="round" style="stroke-width:1.0"/>
</g>
</svg>
</body></html>
